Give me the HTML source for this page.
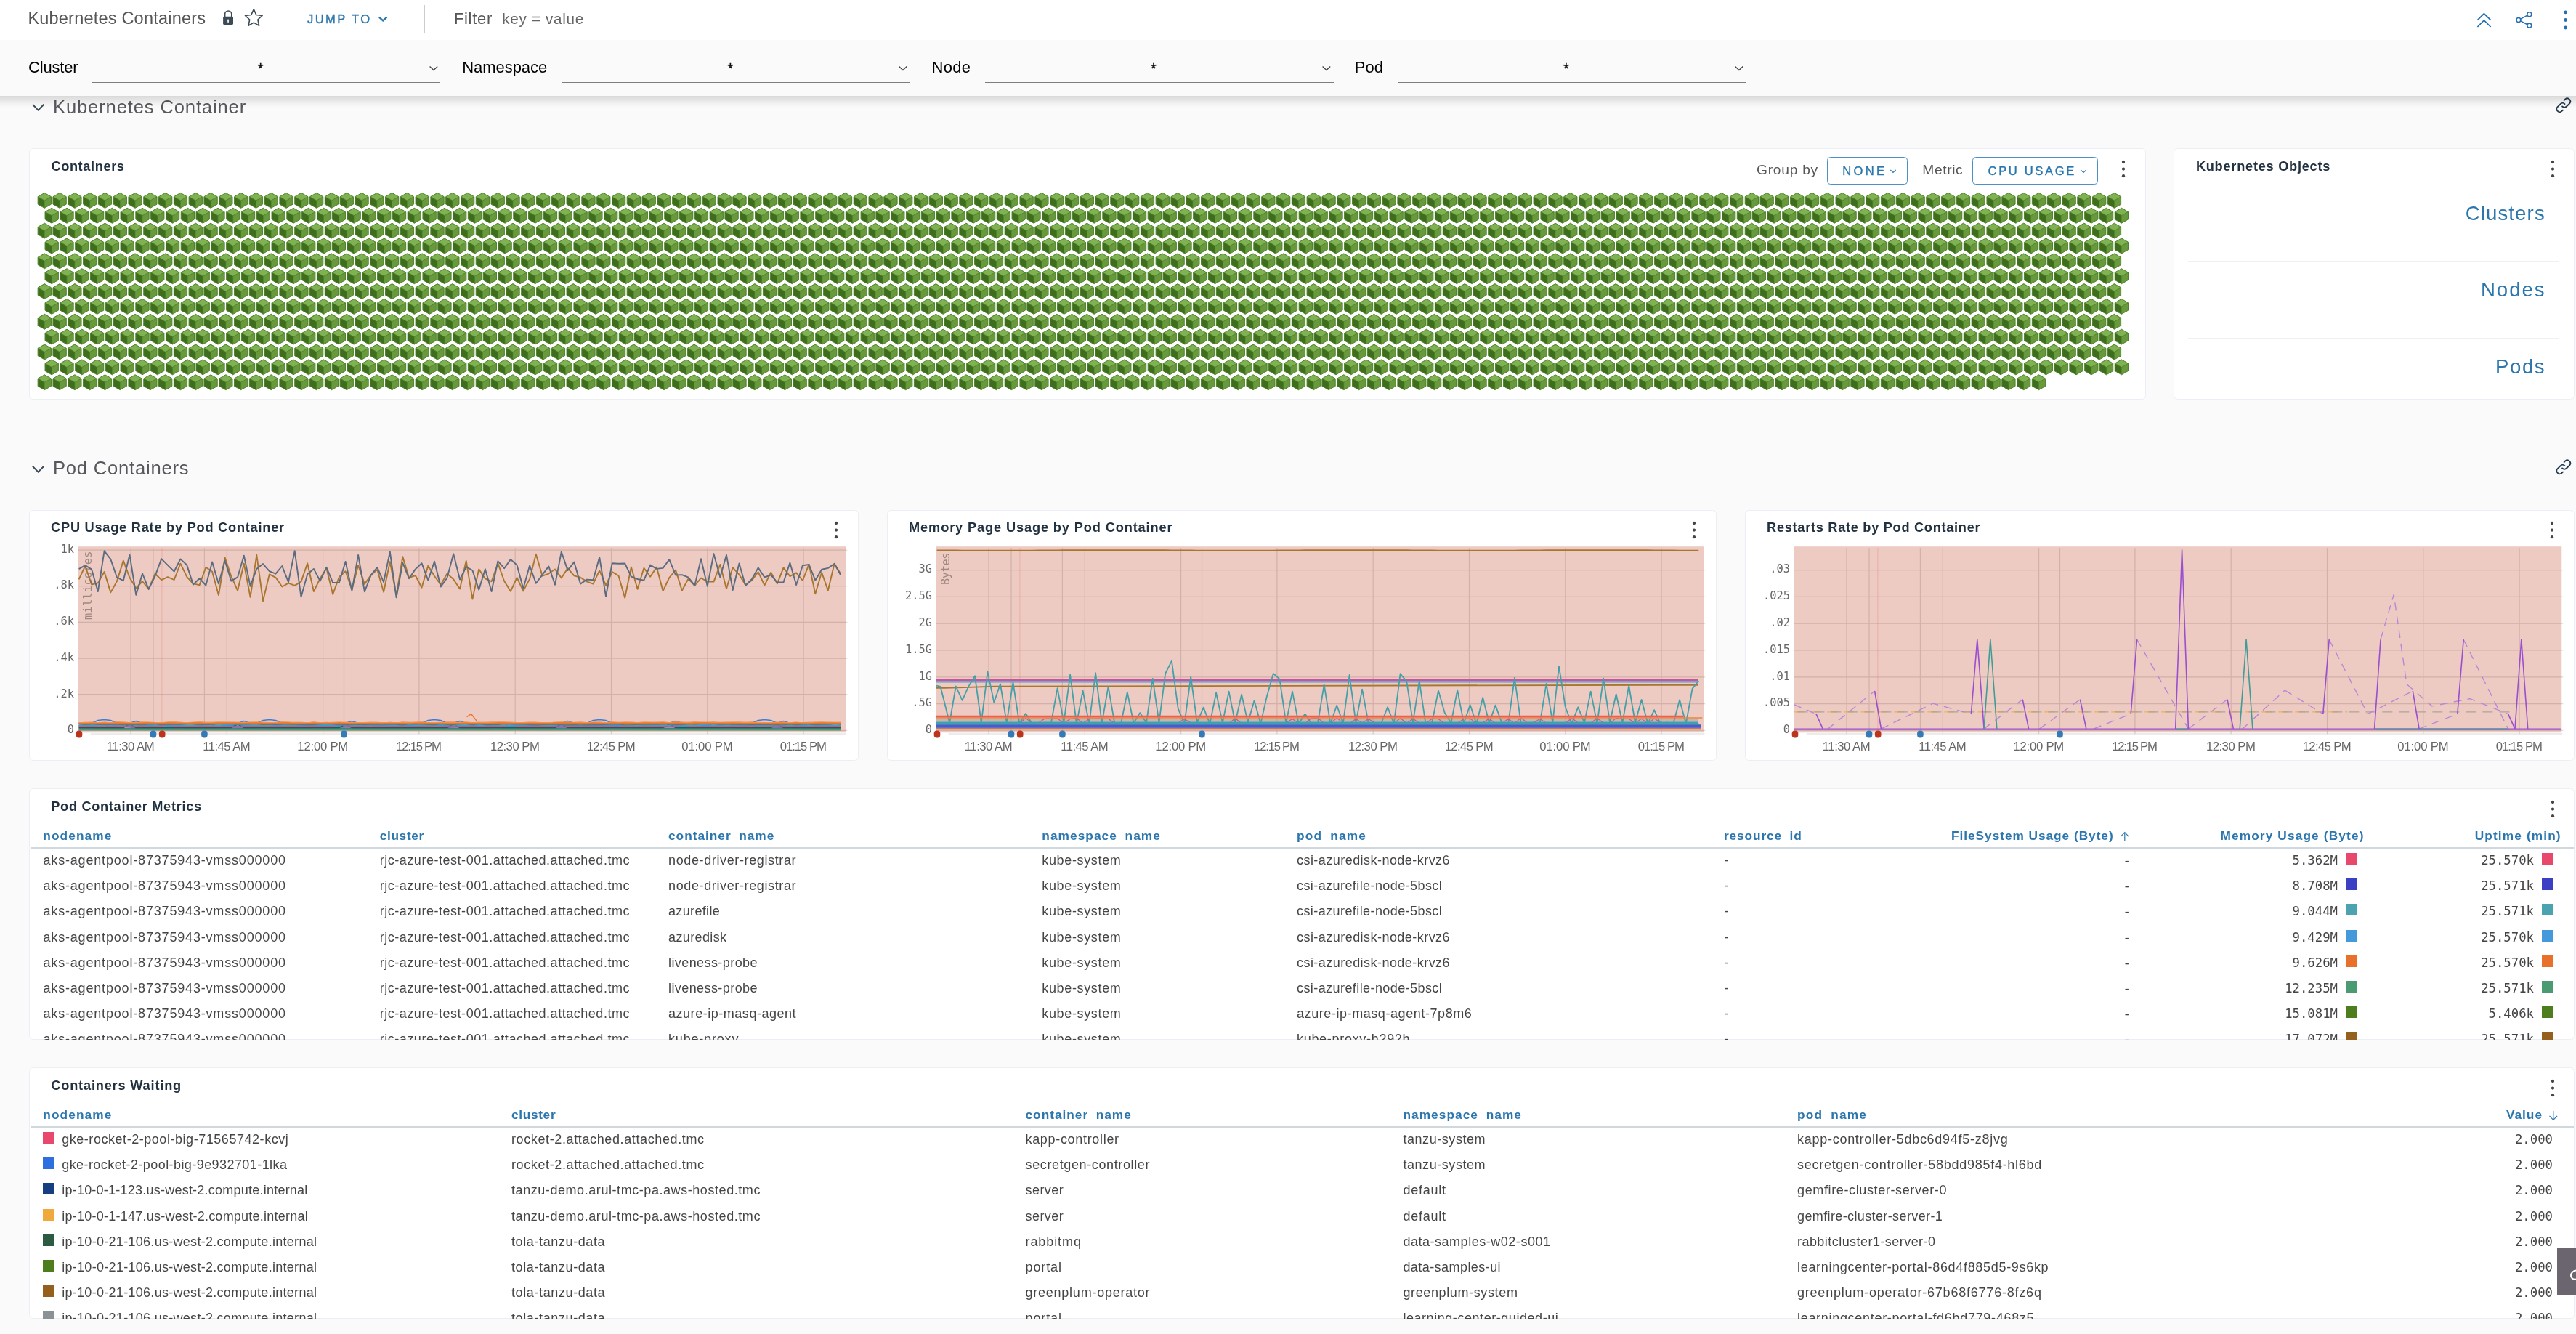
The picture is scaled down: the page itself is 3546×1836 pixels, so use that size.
<!DOCTYPE html><html lang="en"><head><meta charset="utf-8"><title>Kubernetes Containers</title><style>
*{box-sizing:border-box}
html,body{margin:0;padding:0}
h1,h2,h3{margin:0;font-weight:400}
body{width:3546px;height:1836px;overflow:hidden;background:#fafafa;font-family:"Liberation Sans",sans-serif;position:relative}
#app{position:absolute;left:0;top:0;width:3546px;height:1836px;will-change:transform;overflow:hidden}
.t{position:absolute;white-space:pre;line-height:1;display:block}
.abs{position:absolute}
.card{position:absolute;background:#fff;border:1.7px solid #ebeef4;border-radius:5.5px;overflow:hidden}
header{position:absolute;left:0;top:0;width:3546px;height:55px;background:#fff;z-index:5}
.filterbar{position:absolute;left:0;top:55px;width:3546px;height:76.6px;background:#fafafa;z-index:4}
.fshadow{position:absolute;left:0;top:131.6px;width:3546px;height:16px;background:linear-gradient(to bottom,rgba(0,0,0,.13),rgba(0,0,0,.085) 30%,rgba(0,0,0,.035) 65%,rgba(0,0,0,0));z-index:4}
.vdiv{position:absolute;width:1.4px;background:#ccc;top:7.2px;height:38.6px}
.uline{position:absolute;height:1.3px;background:#7d7d7d}
.hr{position:absolute;height:1.4px;background:#7d7680}
svg{position:absolute;overflow:visible}
.sw{position:absolute;width:16px;height:16px}
.m{-webkit-text-stroke:.35px currentColor}
</style></head><body><div id="app"><header><h1 class="t" style="left:38.40px;top:14.00px;font-size:23.5px;color:#565656;letter-spacing:0.211px;">Kubernetes Containers</h1><svg style="left:300px;top:8px" width="30" height="32" viewBox="0 0 30 32"><path d="M9.6 15 V11.6 a4.6 4.6 0 0 1 9.2 0 V15" fill="none" stroke="#3b4a55" stroke-width="1.7"/><rect x="7.1" y="14.7" width="13.9" height="11.2" rx="1.3" fill="#3b4a55"/><path d="M14.05 18.6 a1.2 1.2 0 0 1 .7 2.2 l.3 2 h-2 l.3 -2 a1.2 1.2 0 0 1 .7 -2.2z" fill="#fff"/></svg><svg style="left:330px;top:6px" width="40" height="36" viewBox="0 0 40 36"><polygon points="19.30,6.80 22.77,14.43 31.09,15.37 24.91,21.02 26.59,29.23 19.30,25.10 12.01,29.23 13.69,21.02 7.51,15.37 15.83,14.43" fill="none" stroke="#3b4a55" stroke-width="1.6" stroke-linejoin="round"/></svg><div class="vdiv" style="left:391.8px"></div><span class="t m" style="left:423.10px;top:19.00px;font-size:16.6px;color:#2a76ad;letter-spacing:2.360px;">JUMP TO</span><svg style="left:518px;top:18px" width="20" height="16" viewBox="0 0 20 16"><path d="M3.9 5.6 L9.2 10.4 L14.5 5.6" fill="none" stroke="#2a76ad" stroke-width="2.3"/></svg><div class="vdiv" style="left:583.9px"></div><span class="t" style="left:624.90px;top:15.00px;font-size:22px;color:#565656;letter-spacing:0.702px;">Filter</span><span class="t" style="left:691.30px;top:16.00px;font-size:20.6px;color:#666;letter-spacing:0.705px;">key = value</span><div class="uline" style="left:688px;top:44.8px;width:320px;background:#5e5e5e"></div><svg style="left:3400px;top:10px" width="40" height="36" viewBox="0 0 40 36"><path d="M10.4 17.6 L19.4 8.8 L28.6 17.6 M10.4 27 L19.4 18 L28.6 27" fill="none" stroke="#2470b3" stroke-width="1.7"/></svg><svg style="left:3456px;top:10px" width="40" height="36" viewBox="0 0 40 36"><g fill="none" stroke="#2470b3" stroke-width="1.6"><circle cx="10.9" cy="17.5" r="3"/><circle cx="25.8" cy="9.7" r="3"/><circle cx="25.8" cy="25.1" r="3"/><path d="M13.6 16.1 L23.1 11.1 M13.6 18.9 L23.1 23.7"/></g></svg><svg style="left:3520px;top:10px" width="24" height="36" viewBox="0 0 24 36"><g fill="#2470b3"><circle cx="11.6" cy="6.9" r="2.4"/><circle cx="11.6" cy="17.5" r="2.4"/><circle cx="11.6" cy="28" r="2.4"/></g></svg></header><div class="filterbar"><span class="t" style="left:39.00px;top:27.00px;font-size:22px;color:#000;letter-spacing:-0.198px;">Cluster</span><div class="uline" style="left:126.7px;top:57.900000000000006px;width:479.8px"></div><span class="t m" style="left:354.80px;top:29.00px;font-size:20px;color:#111;">*</span><svg style="left:588.5px;top:33px" width="16" height="12" viewBox="0 0 16 12"><path d="M2.6 3.6 L7.9 8.6 L13.2 3.6" fill="none" stroke="#444" stroke-width="1.35"/></svg><span class="t" style="left:636.30px;top:27.00px;font-size:22px;color:#000;letter-spacing:-0.061px;">Namespace</span><div class="uline" style="left:773.3px;top:57.900000000000006px;width:479.8px"></div><span class="t m" style="left:1001.40px;top:29.00px;font-size:20px;color:#111;">*</span><svg style="left:1235.1px;top:33px" width="16" height="12" viewBox="0 0 16 12"><path d="M2.6 3.6 L7.9 8.6 L13.2 3.6" fill="none" stroke="#444" stroke-width="1.35"/></svg><span class="t" style="left:1282.50px;top:27.00px;font-size:22px;color:#000;letter-spacing:0.302px;">Node</span><div class="uline" style="left:1356px;top:57.900000000000006px;width:479.8px"></div><span class="t m" style="left:1584.10px;top:29.00px;font-size:20px;color:#111;">*</span><svg style="left:1817.8px;top:33px" width="16" height="12" viewBox="0 0 16 12"><path d="M2.6 3.6 L7.9 8.6 L13.2 3.6" fill="none" stroke="#444" stroke-width="1.35"/></svg><span class="t" style="left:1864.70px;top:27.00px;font-size:22px;color:#000;letter-spacing:0.022px;">Pod</span><div class="uline" style="left:1923.9px;top:57.900000000000006px;width:479.8px"></div><span class="t m" style="left:2152.00px;top:29.00px;font-size:20px;color:#111;">*</span><svg style="left:2385.7000000000003px;top:33px" width="16" height="12" viewBox="0 0 16 12"><path d="M2.6 3.6 L7.9 8.6 L13.2 3.6" fill="none" stroke="#444" stroke-width="1.35"/></svg></div><div class="fshadow"></div><svg style="left:42px;top:139.2px" width="22" height="18" viewBox="0 0 22 18"><path d="M2.9 4.8 L10.6 12.6 L18.3 4.8" fill="none" stroke="#3b4a55" stroke-width="2"/></svg><h2 class="t" style="left:73.00px;top:135.00px;font-size:25.6px;color:#5a565e;letter-spacing:0.853px;">Kubernetes Container</h2><div class="hr" style="left:359px;top:147.5px;width:3147px"></div><svg style="left:3516.6px;top:133.39999999999998px" width="23.6" height="23.6" viewBox="0 0 22 22"><path d="M9.4 12.6 a3.9 3.9 0 0 0 5.5 0 l3.9 -3.9 a3.9 3.9 0 0 0 -5.5 -5.5 l-1.5 1.5 M12.6 9.4 a3.9 3.9 0 0 0 -5.5 0 l-3.9 3.9 a3.9 3.9 0 0 0 5.5 5.5 l1.5 -1.5" fill="none" stroke="#21384f" stroke-width="1.7" stroke-linecap="round"/></svg><svg style="left:42px;top:636.6px" width="22" height="18" viewBox="0 0 22 18"><path d="M2.9 4.8 L10.6 12.6 L18.3 4.8" fill="none" stroke="#3b4a55" stroke-width="2"/></svg><h2 class="t" style="left:73.00px;top:632.00px;font-size:25.6px;color:#5a565e;letter-spacing:0.775px;">Pod Containers</h2><div class="hr" style="left:279.5px;top:644.9px;width:3226.5px"></div><svg style="left:3516.6px;top:630.8000000000001px" width="23.6" height="23.6" viewBox="0 0 22 22"><path d="M9.4 12.6 a3.9 3.9 0 0 0 5.5 0 l3.9 -3.9 a3.9 3.9 0 0 0 -5.5 -5.5 l-1.5 1.5 M12.6 9.4 a3.9 3.9 0 0 0 -5.5 0 l-3.9 3.9 a3.9 3.9 0 0 0 5.5 5.5 l1.5 -1.5" fill="none" stroke="#21384f" stroke-width="1.7" stroke-linecap="round"/></svg><section class="card" style="left:40.4px;top:204.0px;width:2913.2px;height:345.79999999999995px"></section><h3 class="t" style="left:70.40px;top:220.00px;font-size:18.2px;color:#22313f;font-weight:700;letter-spacing:0.622px;">Containers</h3><span class="t" style="left:2418.00px;top:224.00px;font-size:19.2px;color:#565656;letter-spacing:0.752px;">Group by</span><div class="abs" style="left:2515.2px;top:216.3px;width:110.8px;height:37.4px;border:1.4px solid #4f8fc4;border-radius:4.5px"></div><span class="t m" style="left:2536.30px;top:228.00px;font-size:16.6px;color:#2a76ad;letter-spacing:3.249px;">NONE</span><svg style="left:2600px;top:230px" width="12" height="10" viewBox="0 0 12 10"><path d="M2.2 3.9 L6 7.5 L9.8 3.9" fill="none" stroke="#2a76ad" stroke-width="1.2"/></svg><span class="t" style="left:2646.30px;top:224.00px;font-size:19.2px;color:#565656;letter-spacing:0.633px;">Metric</span><div class="abs" style="left:2715.2px;top:216.3px;width:173.3px;height:37.4px;border:1.4px solid #4f8fc4;border-radius:4.5px"></div><span class="t m" style="left:2736.50px;top:228.00px;font-size:16.6px;color:#2a76ad;letter-spacing:2.644px;">CPU USAGE</span><svg style="left:2862px;top:230px" width="12" height="10" viewBox="0 0 12 10"><path d="M2.2 3.9 L6 7.5 L9.8 3.9" fill="none" stroke="#2a76ad" stroke-width="1.2"/></svg><svg style="left:2918.3px;top:217.9px" width="10" height="29.2" viewBox="0 0 10 29.2"><g fill="#444"><circle cx="5" cy="5" r="2.15"/><circle cx="5" cy="14.6" r="2.15"/><circle cx="5" cy="24.2" r="2.15"/></g></svg><svg style="left:0;top:0" width="3546" height="600" viewBox="0 0 3546 600"><defs><g id="h"><polygon points="0,-10.45 9.15,-5.22 9.15,5.22 0,10.45 -9.15,5.22 -9.15,-5.22" fill="#4f8429" stroke="#4f8429" stroke-width="1.0" stroke-linejoin="round"/><polygon points="0,-10.45 9.15,-5.22 0,0 -9.15,-5.22" fill="#80b254" transform="scale(.9) translate(0,-.5)"/><polygon points="-9.15,-5.22 0,0 0,10.45 -9.15,5.22" fill="#3f6d1e" transform="scale(.9) translate(-.4,.3)"/><polygon points="0,0 9.15,-5.22 9.15,5.22 0,10.45" fill="#68993c" transform="scale(.9) translate(.4,.3)"/></g><g id="r"><use href="#h" x="0.00"/><use href="#h" x="20.80"/><use href="#h" x="41.59"/><use href="#h" x="62.39"/><use href="#h" x="83.19"/><use href="#h" x="103.98"/><use href="#h" x="124.78"/><use href="#h" x="145.58"/><use href="#h" x="166.38"/><use href="#h" x="187.17"/><use href="#h" x="207.97"/><use href="#h" x="228.77"/><use href="#h" x="249.56"/><use href="#h" x="270.36"/><use href="#h" x="291.16"/><use href="#h" x="311.95"/><use href="#h" x="332.75"/><use href="#h" x="353.55"/><use href="#h" x="374.35"/><use href="#h" x="395.14"/><use href="#h" x="415.94"/><use href="#h" x="436.74"/><use href="#h" x="457.53"/><use href="#h" x="478.33"/><use href="#h" x="499.13"/><use href="#h" x="519.93"/><use href="#h" x="540.72"/><use href="#h" x="561.52"/><use href="#h" x="582.32"/><use href="#h" x="603.11"/><use href="#h" x="623.91"/><use href="#h" x="644.71"/><use href="#h" x="665.50"/><use href="#h" x="686.30"/><use href="#h" x="707.10"/><use href="#h" x="727.89"/><use href="#h" x="748.69"/><use href="#h" x="769.49"/><use href="#h" x="790.29"/><use href="#h" x="811.08"/><use href="#h" x="831.88"/><use href="#h" x="852.68"/><use href="#h" x="873.47"/><use href="#h" x="894.27"/><use href="#h" x="915.07"/><use href="#h" x="935.87"/><use href="#h" x="956.66"/><use href="#h" x="977.46"/><use href="#h" x="998.26"/><use href="#h" x="1019.05"/><use href="#h" x="1039.85"/><use href="#h" x="1060.65"/><use href="#h" x="1081.44"/><use href="#h" x="1102.24"/><use href="#h" x="1123.04"/><use href="#h" x="1143.84"/><use href="#h" x="1164.63"/><use href="#h" x="1185.43"/><use href="#h" x="1206.23"/><use href="#h" x="1227.02"/><use href="#h" x="1247.82"/><use href="#h" x="1268.62"/><use href="#h" x="1289.41"/><use href="#h" x="1310.21"/><use href="#h" x="1331.01"/><use href="#h" x="1351.81"/><use href="#h" x="1372.60"/><use href="#h" x="1393.40"/><use href="#h" x="1414.20"/><use href="#h" x="1434.99"/><use href="#h" x="1455.79"/><use href="#h" x="1476.59"/><use href="#h" x="1497.38"/><use href="#h" x="1518.18"/><use href="#h" x="1538.98"/><use href="#h" x="1559.78"/><use href="#h" x="1580.57"/><use href="#h" x="1601.37"/><use href="#h" x="1622.17"/><use href="#h" x="1642.96"/><use href="#h" x="1663.76"/><use href="#h" x="1684.56"/><use href="#h" x="1705.35"/><use href="#h" x="1726.15"/><use href="#h" x="1746.95"/><use href="#h" x="1767.75"/><use href="#h" x="1788.54"/><use href="#h" x="1809.34"/><use href="#h" x="1830.14"/><use href="#h" x="1850.93"/><use href="#h" x="1871.73"/><use href="#h" x="1892.53"/><use href="#h" x="1913.32"/><use href="#h" x="1934.12"/><use href="#h" x="1954.92"/><use href="#h" x="1975.72"/><use href="#h" x="1996.51"/><use href="#h" x="2017.31"/><use href="#h" x="2038.11"/><use href="#h" x="2058.90"/><use href="#h" x="2079.70"/><use href="#h" x="2100.50"/><use href="#h" x="2121.29"/><use href="#h" x="2142.09"/><use href="#h" x="2162.89"/><use href="#h" x="2183.68"/><use href="#h" x="2204.48"/><use href="#h" x="2225.28"/><use href="#h" x="2246.08"/><use href="#h" x="2266.87"/><use href="#h" x="2287.67"/><use href="#h" x="2308.47"/><use href="#h" x="2329.26"/><use href="#h" x="2350.06"/><use href="#h" x="2370.86"/><use href="#h" x="2391.66"/><use href="#h" x="2412.45"/><use href="#h" x="2433.25"/><use href="#h" x="2454.05"/><use href="#h" x="2474.84"/><use href="#h" x="2495.64"/><use href="#h" x="2516.44"/><use href="#h" x="2537.23"/><use href="#h" x="2558.03"/><use href="#h" x="2578.83"/><use href="#h" x="2599.62"/><use href="#h" x="2620.42"/><use href="#h" x="2641.22"/><use href="#h" x="2662.02"/><use href="#h" x="2682.81"/><use href="#h" x="2703.61"/><use href="#h" x="2724.41"/><use href="#h" x="2745.20"/></g><g id="rt"><use href="#h" x="2766.00"/><use href="#h" x="2786.80"/><use href="#h" x="2807.60"/><use href="#h" x="2828.39"/><use href="#h" x="2849.19"/></g></defs><use href="#r" x="61.30" y="275.90"/><use href="#rt" x="61.30" y="275.90"/><use href="#r" x="71.20" y="296.76"/><use href="#rt" x="71.20" y="296.76"/><use href="#r" x="61.30" y="317.62"/><use href="#rt" x="61.30" y="317.62"/><use href="#r" x="71.20" y="338.48"/><use href="#rt" x="71.20" y="338.48"/><use href="#r" x="61.30" y="359.34"/><use href="#rt" x="61.30" y="359.34"/><use href="#r" x="71.20" y="380.20"/><use href="#rt" x="71.20" y="380.20"/><use href="#r" x="61.30" y="401.06"/><use href="#rt" x="61.30" y="401.06"/><use href="#r" x="71.20" y="421.92"/><use href="#rt" x="71.20" y="421.92"/><use href="#r" x="61.30" y="442.78"/><use href="#rt" x="61.30" y="442.78"/><use href="#r" x="71.20" y="463.64"/><use href="#rt" x="71.20" y="463.64"/><use href="#r" x="61.30" y="484.50"/><use href="#rt" x="61.30" y="484.50"/><use href="#r" x="71.20" y="505.36"/><use href="#rt" x="71.20" y="505.36"/><use href="#r" x="61.30" y="526.22"/></svg><section class="card" style="left:2992px;top:204px;width:552.2px;height:345.8px"><div class="abs" style="left:19.2px;top:153.6px;width:511px;height:1.4px;background:#eef0f4"></div><div class="abs" style="left:19.2px;top:259.7px;width:511px;height:1.4px;background:#eef0f4"></div></section><h3 class="t" style="left:3022.90px;top:220.00px;font-size:18.2px;color:#22313f;font-weight:700;letter-spacing:0.745px;">Kubernetes Objects</h3><svg style="left:3508.7px;top:218px" width="10" height="29.2" viewBox="0 0 10 29.2"><g fill="#444"><circle cx="5" cy="5" r="2.15"/><circle cx="5" cy="14.6" r="2.15"/><circle cx="5" cy="24.2" r="2.15"/></g></svg><span class="t" style="left:3393.70px;top:280.00px;font-size:27.6px;color:#2a76ad;letter-spacing:1.114px;">Clusters</span><span class="t" style="left:3414.90px;top:385.00px;font-size:27.6px;color:#2a76ad;letter-spacing:1.984px;">Nodes</span><span class="t" style="left:3435.10px;top:491.00px;font-size:27.6px;color:#2a76ad;letter-spacing:1.531px;">Pods</span><section class="card" style="left:40.4px;top:701.8px;width:1142px;height:345.6px"></section><h3 class="t" style="left:70.10px;top:717.00px;font-size:18.2px;color:#22313f;font-weight:700;letter-spacing:0.762px;">CPU Usage Rate by Pod Container</h3><svg style="left:1146.2px;top:715.2px" width="10" height="29.2" viewBox="0 0 10 29.2"><g fill="#444"><circle cx="5" cy="5" r="2.15"/><circle cx="5" cy="14.6" r="2.15"/><circle cx="5" cy="24.2" r="2.15"/></g></svg><svg style="left:40.7px;top:701.9px" width="1140.5" height="344.8" viewBox="0 0 1140.5 344.8"><rect x="66.6" y="50.2" width="1056.7" height="256.1" fill="#eecbc2"/><path d="M83.6 308.1 H1124.3" stroke="#e6e6e6" stroke-width="1.5"/><path d="M66.6 55.1 H1125.3 M66.6 104.7 H1125.3 M66.6 154.4 H1125.3 M66.6 204.1 H1125.3 M66.6 253.7 H1125.3 M66.6 303.3 H1125.3 M139.0 52.2 V308.3 M271.3 52.2 V308.3 M403.6 52.2 V308.3 M535.9 52.2 V308.3 M668.2 52.2 V308.3 M800.5 52.2 V308.3 M932.8 52.2 V308.3 M1065.1 52.2 V308.3 M170.0 52.2 V306.3 M240.4 52.2 V306.3 M432.5 52.2 V306.3 " stroke="rgba(110,80,80,.21)" stroke-width="1.2" fill="none"/><path d="M181.9 52.2 V306.3" stroke="rgba(225,120,110,.30)" stroke-width="1.2"/><polyline points="67.6,95.3 76.3,76.8 85.1,102.5 93.8,100.4 102.6,85.0 111.3,113.4 120.0,97.9 128.8,69.6 137.5,93.1 146.3,107.5 155.0,98.0 163.7,108.7 172.5,87.5 181.2,96.2 189.9,92.1 198.7,96.0 207.4,73.7 216.2,91.8 224.9,101.4 233.6,103.1 242.4,78.7 251.1,84.7 259.9,117.1 268.6,65.4 277.3,91.2 286.1,110.8 294.8,73.7 303.6,119.8 312.3,61.8 321.0,125.2 329.8,88.4 338.5,92.8 347.3,105.5 356.0,100.7 364.7,103.9 373.5,98.6 382.2,73.3 390.9,112.0 399.7,94.2 408.4,80.0 417.2,115.9 425.9,92.0 434.6,84.3 443.4,109.4 452.1,76.0 460.9,101.9 469.6,89.6 478.3,82.1 487.1,112.7 495.8,71.2 504.6,117.4 513.3,64.1 522.0,93.0 530.8,90.0 539.5,106.7 548.3,76.8 557.0,90.8 565.7,102.8 574.5,87.4 583.2,95.2 592.0,108.6 600.7,69.9 609.4,122.6 618.2,81.4 626.9,94.5 635.6,98.2 644.4,73.2 653.1,97.7 661.9,111.8 670.6,92.8 679.3,111.4 688.1,94.9 696.8,60.7 705.6,90.7 714.3,87.6 723.0,81.4 731.8,93.4 740.5,79.9 749.3,90.3 758.0,92.7 766.7,98.4 775.5,101.6 784.2,83.1 793.0,103.5 801.7,85.1 810.4,90.2 819.2,120.7 827.9,78.5 836.6,108.8 845.4,79.8 854.1,91.7 862.9,78.6 871.6,111.4 880.3,93.0 889.1,82.6 897.8,110.8 906.6,94.5 915.3,103.8 924.0,93.5 932.8,98.5 941.5,98.6 950.3,75.0 959.0,108.2 967.7,79.1 976.5,88.8 985.2,102.9 994.0,96.7 1002.7,85.2 1011.4,103.6 1020.2,85.7 1028.9,101.4 1037.6,79.2 1046.4,91.1 1055.1,86.3 1063.9,97.0 1072.6,74.6 1081.3,115.2 1090.1,85.7 1098.8,110.8 1107.6,73.7 1116.3,87.9" fill="none" stroke="#a8762f" stroke-width="1.9" stroke-linejoin="round"/><polyline points="67.6,81.1 76.3,76.1 85.1,81.5 93.8,112.1 102.6,56.3 111.3,67.7 120.0,92.7 128.8,97.2 137.5,61.6 146.3,116.8 155.0,87.4 163.7,108.9 172.5,90.8 181.2,67.2 189.9,75.9 198.7,84.5 207.4,67.4 216.2,75.6 224.9,102.6 233.6,94.0 242.4,103.5 251.1,71.4 259.9,101.4 268.6,69.6 277.3,97.6 286.1,92.4 294.8,62.6 303.6,104.7 312.3,80.9 321.0,74.1 329.8,84.1 338.5,87.7 347.3,77.0 356.0,99.2 364.7,56.3 373.5,119.6 382.2,88.2 390.9,80.9 399.7,97.7 408.4,78.8 417.2,99.9 425.9,99.6 434.6,71.0 443.4,110.9 452.1,61.9 460.9,112.4 469.6,89.6 478.3,78.9 487.1,99.1 495.8,57.5 504.6,120.4 513.3,72.5 522.0,94.2 530.8,81.4 539.5,73.2 548.3,96.6 557.0,70.7 565.7,105.6 574.5,93.2 583.2,60.3 592.0,95.5 600.7,78.2 609.4,83.0 618.2,109.6 626.9,81.2 635.6,112.0 644.4,70.3 653.1,80.2 661.9,67.9 670.6,75.8 679.3,108.1 688.1,76.4 696.8,100.8 705.6,89.1 714.3,77.4 723.0,102.7 731.8,57.5 740.5,83.1 749.3,71.6 758.0,101.6 766.7,95.6 775.5,96.3 784.2,65.0 793.0,118.7 801.7,73.3 810.4,73.8 819.2,73.5 827.9,91.7 836.6,95.0 845.4,96.7 854.1,75.6 862.9,80.9 871.6,79.9 880.3,68.1 889.1,89.5 897.8,89.1 906.6,92.7 915.3,103.9 924.0,67.2 932.8,104.7 941.5,60.3 950.3,92.6 959.0,61.8 967.7,110.0 976.5,73.5 985.2,104.0 994.0,95.0 1002.7,79.4 1011.4,92.5 1020.2,89.3 1028.9,99.7 1037.6,99.1 1046.4,72.5 1055.1,103.0 1063.9,76.2 1072.6,75.0 1081.3,96.7 1090.1,81.8 1098.8,79.9 1107.6,74.0 1116.3,89.5" fill="none" stroke="#5b6b80" stroke-width="1.9" stroke-linejoin="round"/><polyline points="67.6,302.2 76.3,302.2 85.1,302.2 93.8,302.2 102.6,302.2 111.3,302.2 120.0,302.2 128.8,302.2 137.5,302.2 146.3,302.2 155.0,302.2 163.7,302.2 172.5,302.2 181.2,302.2 189.9,302.2 198.7,302.2 207.4,302.2 216.2,302.2 224.9,302.2 233.6,302.2 242.4,302.2 251.1,302.2 259.9,302.2 268.6,302.2 277.3,302.2 286.1,302.2 294.8,302.2 303.6,302.2 312.3,302.2 321.0,302.2 329.8,302.2 338.5,302.2 347.3,302.2 356.0,302.2 364.7,302.2 373.5,302.2 382.2,302.2 390.9,302.2 399.7,302.2 408.4,302.2 417.2,302.2 425.9,302.2 434.6,302.2 443.4,302.2 452.1,302.2 460.9,302.2 469.6,302.2 478.3,302.2 487.1,302.2 495.8,302.2 504.6,302.2 513.3,302.2 522.0,302.2 530.8,302.2 539.5,302.2 548.3,302.2 557.0,302.2 565.7,302.2 574.5,302.2 583.2,302.2 592.0,302.2 600.7,302.2 609.4,302.2 618.2,302.2 626.9,302.2 635.6,302.2 644.4,302.2 653.1,302.2 661.9,302.2 670.6,302.2 679.3,302.2 688.1,302.2 696.8,302.2 705.6,302.2 714.3,302.2 723.0,302.2 731.8,302.2 740.5,302.2 749.3,302.2 758.0,302.2 766.7,302.2 775.5,302.2 784.2,302.2 793.0,302.2 801.7,302.2 810.4,302.2 819.2,302.2 827.9,302.2 836.6,302.2 845.4,302.2 854.1,302.2 862.9,302.2 871.6,302.2 880.3,302.2 889.1,302.2 897.8,302.2 906.6,302.2 915.3,302.2 924.0,302.2 932.8,302.2 941.5,302.2 950.3,302.2 959.0,302.2 967.7,302.2 976.5,302.2 985.2,302.2 994.0,302.2 1002.7,302.2 1011.4,302.2 1020.2,302.2 1028.9,302.2 1037.6,302.2 1046.4,302.2 1055.1,302.2 1063.9,302.2 1072.6,302.2 1081.3,302.2 1090.1,302.2 1098.8,302.2 1107.6,302.2 1116.3,302.2" fill="none" stroke="#4a9b6e" stroke-width="2.4" stroke-linejoin="round"/><polyline points="67.6,300.4 76.3,300.6 85.1,300.2 93.8,300.2 102.6,300.5 111.3,300.4 120.0,300.6 128.8,300.6 137.5,300.6 146.3,300.4 155.0,300.6 163.7,300.2 172.5,300.7 181.2,300.6 189.9,300.6 198.7,300.3 207.4,300.5 216.2,300.5 224.9,300.5 233.6,300.4 242.4,300.5 251.1,300.6 259.9,300.5 268.6,300.5 277.3,300.6 286.1,300.3 294.8,300.4 303.6,300.4 312.3,300.3 321.0,300.5 329.8,300.5 338.5,300.5 347.3,300.5 356.0,300.4 364.7,300.7 373.5,300.5 382.2,300.4 390.9,300.5 399.7,300.7 408.4,300.3 417.2,300.7 425.9,300.4 434.6,300.6 443.4,300.7 452.1,300.6 460.9,300.7 469.6,300.6 478.3,300.4 487.1,300.3 495.8,300.5 504.6,300.4 513.3,300.5 522.0,300.4 530.8,300.3 539.5,300.5 548.3,300.3 557.0,300.4 565.7,300.4 574.5,300.7 583.2,300.7 592.0,300.7 600.7,300.5 609.4,300.2 618.2,300.3 626.9,300.3 635.6,300.6 644.4,300.3 653.1,300.3 661.9,300.3 670.6,300.3 679.3,300.6 688.1,300.6 696.8,300.3 705.6,300.3 714.3,300.3 723.0,300.5 731.8,300.3 740.5,300.6 749.3,300.2 758.0,300.3 766.7,300.5 775.5,300.7 784.2,300.4 793.0,300.4 801.7,300.5 810.4,300.7 819.2,300.6 827.9,300.3 836.6,300.6 845.4,300.2 854.1,300.6 862.9,300.6 871.6,300.6 880.3,300.2 889.1,300.2 897.8,300.5 906.6,300.6 915.3,300.4 924.0,300.3 932.8,300.7 941.5,300.4 950.3,300.3 959.0,300.5 967.7,300.4 976.5,300.3 985.2,300.6 994.0,300.6 1002.7,300.4 1011.4,300.4 1020.2,300.4 1028.9,300.5 1037.6,300.2 1046.4,300.6 1055.1,300.4 1063.9,300.3 1072.6,300.5 1081.3,300.7 1090.1,300.6 1098.8,300.7 1107.6,300.6 1116.3,300.6" fill="none" stroke="#3f8088" stroke-width="1.8" stroke-linejoin="round"/><polyline points="67.6,299.7 76.3,299.2 85.1,299.7 93.8,299.1 102.6,299.2 111.3,299.4 120.0,299.2 128.8,299.3 137.5,299.8 146.3,299.3 155.0,299.2 163.7,299.3 172.5,299.0 181.2,299.1 189.9,299.5 198.7,299.6 207.4,299.7 216.2,299.0 224.9,299.1 233.6,299.2 242.4,299.4 251.1,299.3 259.9,299.6 268.6,299.3 277.3,299.7 286.1,299.2 294.8,299.2 303.6,299.2 312.3,299.6 321.0,299.7 329.8,299.5 338.5,299.1 347.3,299.3 356.0,299.1 364.7,299.4 373.5,299.4 382.2,298.9 390.9,299.7 399.7,299.6 408.4,299.2 417.2,299.2 425.9,299.4 434.6,299.3 443.4,299.4 452.1,299.2 460.9,298.9 469.6,299.0 478.3,299.2 487.1,299.4 495.8,298.9 504.6,299.4 513.3,299.2 522.0,299.0 530.8,299.1 539.5,299.4 548.3,299.1 557.0,299.2 565.7,298.9 574.5,299.2 583.2,299.3 592.0,298.9 600.7,299.3 609.4,299.4 618.2,298.9 626.9,298.9 635.6,299.7 644.4,299.8 653.1,299.0 661.9,298.9 670.6,299.4 679.3,299.6 688.1,299.1 696.8,298.9 705.6,299.6 714.3,299.4 723.0,299.2 731.8,299.6 740.5,299.4 749.3,299.7 758.0,299.3 766.7,299.6 775.5,299.7 784.2,299.4 793.0,299.7 801.7,299.7 810.4,299.7 819.2,299.4 827.9,299.5 836.6,299.1 845.4,299.4 854.1,299.6 862.9,299.6 871.6,299.5 880.3,299.1 889.1,299.6 897.8,299.4 906.6,299.0 915.3,299.0 924.0,299.4 932.8,299.0 941.5,299.2 950.3,299.6 959.0,299.7 967.7,299.7 976.5,299.0 985.2,299.4 994.0,299.0 1002.7,298.9 1011.4,298.9 1020.2,299.4 1028.9,299.8 1037.6,299.6 1046.4,299.6 1055.1,299.2 1063.9,299.1 1072.6,298.9 1081.3,299.1 1090.1,298.9 1098.8,299.2 1107.6,299.4 1116.3,299.0" fill="none" stroke="#5b7fa8" stroke-width="1.4" stroke-linejoin="round"/><polyline points="67.6,298.1 76.3,298.6 85.1,298.4 93.8,298.4 102.6,298.9 111.3,299.0 120.0,298.5 128.8,299.0 137.5,298.7 146.3,298.2 155.0,298.2 163.7,299.0 172.5,299.0 181.2,298.9 189.9,298.3 198.7,299.1 207.4,298.9 216.2,299.0 224.9,299.0 233.6,298.6 242.4,298.9 251.1,298.7 259.9,298.4 268.6,298.4 277.3,298.7 286.1,298.3 294.8,298.5 303.6,298.3 312.3,298.8 321.0,298.7 329.8,298.5 338.5,298.1 347.3,298.5 356.0,298.6 364.7,298.8 373.5,298.8 382.2,298.9 390.9,298.1 399.7,298.2 408.4,298.2 417.2,298.6 425.9,298.4 434.6,298.8 443.4,298.6 452.1,298.9 460.9,298.7 469.6,298.8 478.3,299.0 487.1,298.2 495.8,299.0 504.6,298.3 513.3,298.4 522.0,299.0 530.8,298.6 539.5,298.1 548.3,298.1 557.0,298.5 565.7,298.3 574.5,298.4 583.2,298.8 592.0,298.5 600.7,298.5 609.4,298.7 618.2,298.3 626.9,298.6 635.6,298.3 644.4,299.0 653.1,298.6 661.9,299.0 670.6,298.4 679.3,298.2 688.1,298.5 696.8,298.5 705.6,298.5 714.3,298.9 723.0,298.7 731.8,298.5 740.5,298.4 749.3,298.7 758.0,298.6 766.7,298.8 775.5,298.5 784.2,298.4 793.0,298.8 801.7,298.4 810.4,298.2 819.2,298.5 827.9,298.1 836.6,298.8 845.4,298.2 854.1,298.9 862.9,298.7 871.6,298.3 880.3,299.0 889.1,298.5 897.8,298.2 906.6,298.1 915.3,298.4 924.0,298.7 932.8,298.8 941.5,298.5 950.3,299.0 959.0,299.1 967.7,298.2 976.5,298.5 985.2,298.9 994.0,298.7 1002.7,298.8 1011.4,298.2 1020.2,298.8 1028.9,298.4 1037.6,298.3 1046.4,298.8 1055.1,298.8 1063.9,298.6 1072.6,298.7 1081.3,298.5 1090.1,298.8 1098.8,298.3 1107.6,298.7 1116.3,298.9" fill="none" stroke="#8a8fb0" stroke-width="1.3" stroke-linejoin="round"/><polyline points="67.6,297.4 76.3,297.5 85.1,297.7 93.8,298.5 102.6,298.3 111.3,297.8 120.0,297.6 128.8,298.8 137.5,298.6 146.3,297.5 155.0,298.7 163.7,297.9 172.5,298.3 181.2,297.9 189.9,297.5 198.7,298.0 207.4,298.2 216.2,298.4 224.9,297.9 233.6,297.9 242.4,298.2 251.1,298.1 259.9,298.0 268.6,298.4 277.3,298.6 286.1,298.0 294.8,298.7 303.6,297.9 312.3,297.6 321.0,297.6 329.8,298.5 338.5,298.2 347.3,297.5 356.0,298.3 364.7,297.4 373.5,298.5 382.2,297.6 390.9,298.8 399.7,297.8 408.4,297.6 417.2,298.0 425.9,297.9 434.6,297.5 443.4,297.3 452.1,298.6 460.9,298.1 469.6,298.8 478.3,298.3 487.1,298.6 495.8,298.6 504.6,297.9 513.3,298.7 522.0,298.6 530.8,298.8 539.5,297.6 548.3,298.5 557.0,298.7 565.7,297.9 574.5,297.8 583.2,297.9 592.0,298.0 600.7,298.0 609.4,297.8 618.2,298.4 626.9,297.6 635.6,297.8 644.4,297.6 653.1,297.5 661.9,297.6 670.6,298.1 679.3,298.1 688.1,297.7 696.8,298.0 705.6,298.8 714.3,297.5 723.0,298.5 731.8,298.1 740.5,298.2 749.3,298.7 758.0,298.0 766.7,298.0 775.5,297.6 784.2,297.9 793.0,298.4 801.7,298.0 810.4,297.4 819.2,297.9 827.9,297.6 836.6,298.8 845.4,297.8 854.1,298.5 862.9,298.6 871.6,298.3 880.3,298.6 889.1,298.7 897.8,298.5 906.6,298.5 915.3,298.5 924.0,297.6 932.8,298.7 941.5,298.5 950.3,298.8 959.0,298.1 967.7,298.5 976.5,298.0 985.2,298.5 994.0,298.5 1002.7,298.1 1011.4,298.7 1020.2,297.5 1028.9,298.0 1037.6,298.2 1046.4,298.0 1055.1,297.4 1063.9,298.1 1072.6,298.2 1081.3,298.5 1090.1,298.3 1098.8,297.7 1107.6,297.9 1116.3,298.4" fill="none" stroke="#c0c8d0" stroke-width="1.2" stroke-linejoin="round"/><polyline points="67.6,297.0 76.3,297.8 85.1,297.2 93.8,296.9 102.6,297.9 111.3,297.2 120.0,297.8 128.8,298.1 137.5,297.8 146.3,297.2 155.0,298.1 163.7,297.4 172.5,297.8 181.2,298.1 189.9,297.7 198.7,297.8 207.4,297.7 216.2,297.0 224.9,297.0 233.6,298.0 242.4,296.9 251.1,297.4 259.9,296.9 268.6,297.1 277.3,297.6 286.1,298.0 294.8,297.0 303.6,296.8 312.3,297.4 321.0,298.2 329.8,297.1 338.5,297.2 347.3,297.0 356.0,296.9 364.7,296.9 373.5,297.2 382.2,297.8 390.9,297.5 399.7,297.6 408.4,297.2 417.2,297.4 425.9,297.1 434.6,297.6 443.4,297.5 452.1,296.9 460.9,297.2 469.6,296.9 478.3,297.3 487.1,298.2 495.8,297.7 504.6,297.9 513.3,297.9 522.0,298.1 530.8,298.2 539.5,297.6 548.3,297.2 557.0,297.0 565.7,296.9 574.5,297.5 583.2,298.3 592.0,298.1 600.7,298.3 609.4,297.0 618.2,297.9 626.9,297.3 635.6,297.7 644.4,297.5 653.1,297.1 661.9,297.4 670.6,298.2 679.3,297.4 688.1,297.8 696.8,296.9 705.6,297.9 714.3,298.0 723.0,297.0 731.8,297.7 740.5,298.2 749.3,297.2 758.0,297.0 766.7,297.6 775.5,298.1 784.2,297.0 793.0,297.8 801.7,298.0 810.4,298.3 819.2,297.0 827.9,298.0 836.6,298.2 845.4,297.8 854.1,297.3 862.9,296.9 871.6,298.0 880.3,297.4 889.1,297.9 897.8,297.1 906.6,297.6 915.3,297.3 924.0,297.1 932.8,297.5 941.5,297.6 950.3,298.3 959.0,298.1 967.7,297.3 976.5,297.2 985.2,297.5 994.0,298.3 1002.7,297.2 1011.4,297.1 1020.2,297.1 1028.9,297.2 1037.6,297.3 1046.4,297.8 1055.1,297.8 1063.9,298.1 1072.6,297.4 1081.3,297.8 1090.1,297.1 1098.8,298.0 1107.6,297.9 1116.3,298.2" fill="none" stroke="#8a63c0" stroke-width="1.0" stroke-linejoin="round"/><polyline points="67.6,296.6 76.3,296.4 85.1,297.3 93.8,296.4 102.6,296.5 111.3,297.3 120.0,296.5 128.8,296.5 137.5,297.2 146.3,296.4 155.0,297.0 163.7,296.9 172.5,296.7 181.2,296.7 189.9,296.6 198.7,297.1 207.4,296.9 216.2,297.2 224.9,297.1 233.6,296.9 242.4,297.3 251.1,297.0 259.9,296.5 268.6,297.2 277.3,296.9 286.1,297.3 294.8,296.6 303.6,297.2 312.3,297.2 321.0,296.6 329.8,296.9 338.5,296.8 347.3,296.7 356.0,296.9 364.7,296.9 373.5,297.2 382.2,297.2 390.9,297.1 399.7,297.1 408.4,297.0 417.2,296.5 425.9,297.1 434.6,297.2 443.4,297.1 452.1,297.2 460.9,296.5 469.6,296.4 478.3,296.6 487.1,296.4 495.8,296.8 504.6,296.9 513.3,297.0 522.0,296.7 530.8,297.1 539.5,296.8 548.3,297.0 557.0,296.7 565.7,296.5 574.5,296.7 583.2,297.2 592.0,296.8 600.7,296.6 609.4,296.8 618.2,297.3 626.9,297.2 635.6,296.8 644.4,296.6 653.1,296.9 661.9,296.6 670.6,296.8 679.3,296.5 688.1,297.1 696.8,296.5 705.6,296.6 714.3,297.2 723.0,297.1 731.8,297.1 740.5,296.6 749.3,296.7 758.0,297.3 766.7,296.6 775.5,297.0 784.2,296.5 793.0,297.1 801.7,297.2 810.4,297.0 819.2,296.9 827.9,296.9 836.6,296.8 845.4,297.2 854.1,297.1 862.9,297.3 871.6,296.4 880.3,296.9 889.1,297.1 897.8,297.2 906.6,296.7 915.3,297.3 924.0,297.2 932.8,296.7 941.5,296.8 950.3,296.6 959.0,296.5 967.7,297.0 976.5,296.6 985.2,296.5 994.0,296.5 1002.7,296.8 1011.4,296.6 1020.2,297.3 1028.9,297.2 1037.6,296.8 1046.4,296.8 1055.1,296.7 1063.9,296.9 1072.6,297.3 1081.3,297.0 1090.1,297.1 1098.8,296.7 1107.6,297.1 1116.3,296.6" fill="none" stroke="#3f8fd6" stroke-width="2.2" stroke-linejoin="round"/><polyline points="67.6,299.6 76.3,299.6 85.1,299.6 93.8,299.6 102.6,299.6 111.3,299.6 120.0,299.6 128.8,299.6 137.5,294.6 146.3,299.6 155.0,299.6 163.7,299.6 172.5,299.6 181.2,299.6 189.9,299.6 198.7,299.6 207.4,299.6 216.2,299.6 224.9,299.6 233.6,299.6 242.4,299.6 251.1,299.6 259.9,299.6 268.6,299.6 277.3,299.6 286.1,294.6 294.8,299.6 303.6,299.6 312.3,299.6 321.0,299.6 329.8,299.6 338.5,299.6 347.3,299.6 356.0,299.6 364.7,299.6 373.5,299.6 382.2,299.6 390.9,299.6 399.7,299.6 408.4,299.6 417.2,299.6 425.9,299.6 434.6,294.6 443.4,299.6 452.1,299.6 460.9,299.6 469.6,299.6 478.3,299.6 487.1,299.6 495.8,299.6 504.6,299.6 513.3,299.6 522.0,299.6 530.8,299.6 539.5,299.6 548.3,299.6 557.0,299.6 565.7,299.6 574.5,299.6 583.2,294.6 592.0,299.6 600.7,299.6 609.4,299.6 618.2,299.6 626.9,299.6 635.6,299.6 644.4,299.6 653.1,299.6 661.9,299.6 670.6,299.6 679.3,299.6 688.1,299.6 696.8,299.6 705.6,299.6 714.3,299.6 723.0,299.6 731.8,294.6 740.5,299.6 749.3,299.6 758.0,299.6 766.7,299.6 775.5,299.6 784.2,299.6 793.0,299.6 801.7,299.6 810.4,299.6 819.2,299.6 827.9,299.6 836.6,299.6 845.4,299.6 854.1,299.6 862.9,299.6 871.6,299.6 880.3,294.6 889.1,299.6 897.8,299.6 906.6,299.6 915.3,299.6 924.0,299.6 932.8,299.6 941.5,299.6 950.3,299.6 959.0,299.6 967.7,299.6 976.5,299.6 985.2,299.6 994.0,299.6 1002.7,299.6 1011.4,299.6 1020.2,299.6 1028.9,294.6 1037.6,299.6 1046.4,299.6 1055.1,299.6 1063.9,299.6 1072.6,299.6 1081.3,299.6 1090.1,299.6 1098.8,299.6 1107.6,299.6 1116.3,299.6" fill="none" stroke="#2d5a42" stroke-width="1.3" stroke-linejoin="round"/><polyline points="67.6,297.8 76.3,297.8 85.1,297.8 93.8,297.8 102.6,297.8 111.3,297.8 120.0,297.8 128.8,297.8 137.5,297.8 146.3,297.8 155.0,297.8 163.7,297.8 172.5,297.8 181.2,297.8 189.9,292.4 198.7,297.8 207.4,297.8 216.2,297.8 224.9,297.8 233.6,297.8 242.4,297.8 251.1,297.8 259.9,297.8 268.6,297.8 277.3,297.8 286.1,297.8 294.8,297.8 303.6,297.8 312.3,297.8 321.0,297.8 329.8,297.8 338.5,297.8 347.3,297.8 356.0,297.8 364.7,297.8 373.5,297.8 382.2,297.8 390.9,297.8 399.7,297.8 408.4,297.8 417.2,297.8 425.9,292.4 434.6,297.8 443.4,297.8 452.1,297.8 460.9,297.8 469.6,297.8 478.3,297.8 487.1,297.8 495.8,297.8 504.6,297.8 513.3,297.8 522.0,297.8 530.8,297.8 539.5,297.8 548.3,297.8 557.0,297.8 565.7,297.8 574.5,297.8 583.2,297.8 592.0,297.8 600.7,297.8 609.4,297.8 618.2,297.8 626.9,297.8 635.6,297.8 644.4,297.8 653.1,297.8 661.9,292.4 670.6,297.8 679.3,297.8 688.1,297.8 696.8,297.8 705.6,297.8 714.3,297.8 723.0,297.8 731.8,297.8 740.5,297.8 749.3,297.8 758.0,297.8 766.7,297.8 775.5,297.8 784.2,297.8 793.0,297.8 801.7,297.8 810.4,297.8 819.2,297.8 827.9,297.8 836.6,297.8 845.4,297.8 854.1,297.8 862.9,297.8 871.6,297.8 880.3,297.8 889.1,297.8 897.8,292.4 906.6,297.8 915.3,297.8 924.0,297.8 932.8,297.8 941.5,297.8 950.3,297.8 959.0,297.8 967.7,297.8 976.5,297.8 985.2,297.8 994.0,297.8 1002.7,297.8 1011.4,297.8 1020.2,297.8 1028.9,297.8 1037.6,297.8 1046.4,297.8 1055.1,297.8 1063.9,297.8 1072.6,297.8 1081.3,297.8 1090.1,297.8 1098.8,297.8 1107.6,297.8 1116.3,297.8" fill="none" stroke="#d04fa0" stroke-width="1.2" stroke-linejoin="round"/><polyline points="67.6,296.2 76.3,295.9 85.1,295.8 93.8,296.4 102.6,295.9 111.3,295.2 120.0,295.8 128.8,295.8 137.5,295.4 146.3,295.9 155.0,296.2 163.7,295.3 172.5,296.3 181.2,295.3 189.9,295.3 198.7,295.8 207.4,295.8 216.2,296.5 224.9,296.3 233.6,295.4 242.4,295.5 251.1,295.7 259.9,296.4 268.6,295.5 277.3,295.1 286.1,295.3 294.8,295.6 303.6,295.9 312.3,296.0 321.0,296.4 329.8,296.5 338.5,295.2 347.3,296.0 356.0,296.0 364.7,295.9 373.5,295.1 382.2,295.2 390.9,295.6 399.7,295.4 408.4,295.8 417.2,295.6 425.9,295.4 434.6,295.6 443.4,296.5 452.1,295.9 460.9,295.7 469.6,295.6 478.3,295.2 487.1,295.4 495.8,296.0 504.6,295.9 513.3,295.4 522.0,295.5 530.8,296.1 539.5,296.0 548.3,295.7 557.0,295.9 565.7,295.6 574.5,295.3 583.2,296.0 592.0,295.7 600.7,296.3 609.4,295.4 618.2,295.6 626.9,295.7 635.6,296.1 644.4,296.5 653.1,296.2 661.9,296.2 670.6,295.5 679.3,295.7 688.1,295.3 696.8,295.2 705.6,296.2 714.3,296.4 723.0,295.5 731.8,296.0 740.5,295.4 749.3,295.9 758.0,296.3 766.7,295.2 775.5,295.5 784.2,295.4 793.0,295.5 801.7,295.2 810.4,295.3 819.2,296.5 827.9,296.5 836.6,296.5 845.4,295.5 854.1,295.9 862.9,295.5 871.6,296.5 880.3,296.3 889.1,295.3 897.8,295.7 906.6,296.4 915.3,296.4 924.0,295.4 932.8,295.3 941.5,296.4 950.3,295.1 959.0,296.4 967.7,296.0 976.5,295.7 985.2,295.4 994.0,295.3 1002.7,296.6 1011.4,296.2 1020.2,296.4 1028.9,296.5 1037.6,295.6 1046.4,296.4 1055.1,296.0 1063.9,295.6 1072.6,295.4 1081.3,295.8 1090.1,295.6 1098.8,295.6 1107.6,296.3 1116.3,296.3" fill="none" stroke="#43a0c8" stroke-width="1.6" stroke-linejoin="round"/><polyline points="67.6,294.5 76.3,295.3 85.1,294.6 93.8,295.5 102.6,295.1 111.3,295.4 120.0,295.0 128.8,295.7 137.5,295.2 146.3,295.4 155.0,295.8 163.7,294.6 172.5,294.5 181.2,295.6 189.9,294.9 198.7,295.1 207.4,295.2 216.2,295.0 224.9,294.9 233.6,295.4 242.4,295.3 251.1,295.1 259.9,294.4 268.6,294.5 277.3,294.7 286.1,295.2 294.8,294.5 303.6,294.4 312.3,294.5 321.0,295.6 329.8,295.2 338.5,295.5 347.3,295.2 356.0,294.6 364.7,295.1 373.5,295.4 382.2,295.6 390.9,295.6 399.7,294.6 408.4,294.4 417.2,294.5 425.9,295.8 434.6,295.5 443.4,295.6 452.1,295.2 460.9,295.6 469.6,295.1 478.3,295.2 487.1,294.9 495.8,295.1 504.6,295.1 513.3,295.8 522.0,294.5 530.8,295.2 539.5,294.6 548.3,295.4 557.0,295.7 565.7,294.4 574.5,295.1 583.2,295.6 592.0,294.4 600.7,294.5 609.4,295.7 618.2,294.4 626.9,295.7 635.6,295.7 644.4,295.6 653.1,294.5 661.9,295.0 670.6,295.0 679.3,294.8 688.1,295.4 696.8,295.8 705.6,295.7 714.3,295.5 723.0,295.0 731.8,295.7 740.5,295.8 749.3,295.6 758.0,295.8 766.7,295.8 775.5,295.7 784.2,295.7 793.0,295.4 801.7,294.6 810.4,294.9 819.2,295.8 827.9,295.7 836.6,295.4 845.4,295.2 854.1,295.2 862.9,295.1 871.6,294.8 880.3,294.9 889.1,295.5 897.8,295.4 906.6,294.4 915.3,295.1 924.0,294.5 932.8,294.5 941.5,294.6 950.3,294.9 959.0,294.8 967.7,295.4 976.5,295.5 985.2,295.3 994.0,295.6 1002.7,295.6 1011.4,295.7 1020.2,295.6 1028.9,295.8 1037.6,295.7 1046.4,294.8 1055.1,295.8 1063.9,294.8 1072.6,294.8 1081.3,295.6 1090.1,295.1 1098.8,295.0 1107.6,294.5 1116.3,294.9" fill="none" stroke="#7a6a70" stroke-width="1.2" stroke-linejoin="round"/><polyline points="67.6,294.2 76.3,294.8 85.1,294.0 93.8,294.5 102.6,294.6 111.3,294.4 120.0,294.8 128.8,294.8 137.5,294.6 146.3,294.8 155.0,294.3 163.7,294.6 172.5,294.6 181.2,294.7 189.9,294.8 198.7,294.3 207.4,294.1 216.2,294.6 224.9,294.2 233.6,294.7 242.4,294.2 251.1,294.7 259.9,294.4 268.6,294.6 277.3,294.1 286.1,294.2 294.8,294.9 303.6,294.9 312.3,294.5 321.0,294.8 329.8,294.7 338.5,294.0 347.3,294.1 356.0,295.0 364.7,295.0 373.5,294.4 382.2,294.0 390.9,294.1 399.7,294.3 408.4,294.3 417.2,294.5 425.9,294.5 434.6,294.1 443.4,294.9 452.1,294.3 460.9,294.3 469.6,294.8 478.3,294.2 487.1,294.8 495.8,294.0 504.6,294.2 513.3,294.5 522.0,294.4 530.8,294.0 539.5,294.6 548.3,294.8 557.0,294.3 565.7,294.1 574.5,294.8 583.2,294.2 592.0,294.6 600.7,294.3 609.4,294.5 618.2,294.0 626.9,294.4 635.6,294.0 644.4,294.0 653.1,294.9 661.9,294.1 670.6,294.2 679.3,294.8 688.1,294.4 696.8,294.7 705.6,294.9 714.3,294.9 723.0,294.6 731.8,294.1 740.5,294.9 749.3,294.4 758.0,294.1 766.7,294.6 775.5,294.3 784.2,294.4 793.0,294.2 801.7,294.5 810.4,294.0 819.2,294.6 827.9,294.8 836.6,294.9 845.4,294.7 854.1,294.9 862.9,294.1 871.6,294.9 880.3,294.2 889.1,294.2 897.8,294.5 906.6,294.9 915.3,294.8 924.0,294.1 932.8,294.6 941.5,294.2 950.3,294.9 959.0,294.9 967.7,294.6 976.5,294.6 985.2,294.8 994.0,294.3 1002.7,294.4 1011.4,294.4 1020.2,294.7 1028.9,294.6 1037.6,294.7 1046.4,294.4 1055.1,294.6 1063.9,294.3 1072.6,294.0 1081.3,294.7 1090.1,294.4 1098.8,294.9 1107.6,294.2 1116.3,294.5" fill="none" stroke="#a8683a" stroke-width="1.4" stroke-linejoin="round"/><polyline points="67.6,293.5 76.3,293.5 85.1,293.5 93.8,289.5 102.6,288.5 111.3,289.5 120.0,293.5 128.8,293.5 137.5,293.5 146.3,290.5 155.0,293.5 163.7,293.5 172.5,293.5 181.2,293.5 189.9,293.5 198.7,293.5 207.4,293.5 216.2,293.5 224.9,293.5 233.6,293.5 242.4,293.5 251.1,293.5 259.9,293.5 268.6,293.5 277.3,293.5 286.1,293.5 294.8,290.5 303.6,293.5 312.3,293.5 321.0,289.5 329.8,288.5 338.5,289.5 347.3,293.5 356.0,293.5 364.7,293.5 373.5,293.5 382.2,293.5 390.9,293.5 399.7,293.5 408.4,293.5 417.2,293.5 425.9,293.5 434.6,293.5 443.4,290.5 452.1,293.5 460.9,293.5 469.6,293.5 478.3,293.5 487.1,293.5 495.8,293.5 504.6,293.5 513.3,293.5 522.0,293.5 530.8,293.5 539.5,293.5 548.3,289.5 557.0,288.5 565.7,289.5 574.5,293.5 583.2,293.5 592.0,290.5 600.7,293.5 609.4,293.5 618.2,293.5 626.9,293.5 635.6,293.5 644.4,293.5 653.1,293.5 661.9,293.5 670.6,293.5 679.3,293.5 688.1,293.5 696.8,293.5 705.6,293.5 714.3,293.5 723.0,293.5 731.8,293.5 740.5,290.5 749.3,293.5 758.0,293.5 766.7,293.5 775.5,289.5 784.2,288.5 793.0,289.5 801.7,293.5 810.4,293.5 819.2,293.5 827.9,293.5 836.6,293.5 845.4,293.5 854.1,293.5 862.9,293.5 871.6,293.5 880.3,293.5 889.1,290.5 897.8,293.5 906.6,293.5 915.3,293.5 924.0,293.5 932.8,293.5 941.5,293.5 950.3,293.5 959.0,293.5 967.7,293.5 976.5,293.5 985.2,293.5 994.0,293.5 1002.7,289.5 1011.4,288.5 1020.2,289.5 1028.9,293.5 1037.6,290.5 1046.4,293.5 1055.1,293.5 1063.9,293.5 1072.6,293.5 1081.3,293.5 1090.1,293.5 1098.8,293.5 1107.6,293.5 1116.3,293.5" fill="none" stroke="#3b7dd8" stroke-width="1.7" stroke-linejoin="round"/><polyline points="67.6,293.5 76.3,292.9 85.1,293.0 93.8,293.5 102.6,293.1 111.3,293.3 120.0,292.8 128.8,292.9 137.5,293.3 146.3,293.1 155.0,293.1 163.7,293.3 172.5,293.2 181.2,293.2 189.9,293.1 198.7,292.8 207.4,293.0 216.2,293.5 224.9,293.2 233.6,292.8 242.4,292.9 251.1,293.0 259.9,293.0 268.6,293.0 277.3,293.4 286.1,293.2 294.8,293.3 303.6,293.4 312.3,293.0 321.0,293.5 329.8,293.4 338.5,293.0 347.3,292.8 356.0,293.3 364.7,292.9 373.5,292.9 382.2,293.4 390.9,292.8 399.7,293.4 408.4,293.1 417.2,293.4 425.9,293.4 434.6,293.0 443.4,292.9 452.1,293.4 460.9,293.3 469.6,293.0 478.3,293.1 487.1,293.4 495.8,293.0 504.6,293.4 513.3,292.8 522.0,293.0 530.8,293.0 539.5,292.8 548.3,293.3 557.0,293.3 565.7,293.0 574.5,292.8 583.2,292.8 592.0,292.9 600.7,293.0 609.4,293.2 618.2,292.9 626.9,293.0 635.6,292.8 644.4,292.9 653.1,293.1 661.9,293.0 670.6,293.3 679.3,293.3 688.1,292.9 696.8,293.0 705.6,293.5 714.3,293.3 723.0,293.2 731.8,293.1 740.5,293.2 749.3,293.2 758.0,292.8 766.7,293.2 775.5,293.2 784.2,292.8 793.0,293.3 801.7,293.1 810.4,293.4 819.2,292.9 827.9,292.9 836.6,293.3 845.4,293.0 854.1,293.3 862.9,292.9 871.6,293.1 880.3,293.3 889.1,292.8 897.8,293.1 906.6,293.1 915.3,292.8 924.0,293.3 932.8,293.2 941.5,292.8 950.3,293.2 959.0,292.9 967.7,293.0 976.5,292.8 985.2,293.1 994.0,292.8 1002.7,293.1 1011.4,293.3 1020.2,293.2 1028.9,293.1 1037.6,293.0 1046.4,293.2 1055.1,293.2 1063.9,293.3 1072.6,293.1 1081.3,293.0 1090.1,293.0 1098.8,293.5 1107.6,293.3 1116.3,293.0" fill="none" stroke="#e8742a" stroke-width="2.5" stroke-linejoin="round"/><polyline points="67.6,292.5 76.3,292.7 85.1,292.1 93.8,292.5 102.6,292.1 111.3,292.6 120.0,291.8 128.8,292.1 137.5,292.5 146.3,292.7 155.0,291.9 163.7,291.9 172.5,292.4 181.2,292.6 189.9,291.8 198.7,291.9 207.4,292.3 216.2,292.6 224.9,292.0 233.6,291.8 242.4,292.5 251.1,292.4 259.9,291.9 268.6,292.0 277.3,291.8 286.1,292.1 294.8,292.5 303.6,291.8 312.3,291.9 321.0,291.9 329.8,292.4 338.5,292.5 347.3,291.8 356.0,291.8 364.7,292.7 373.5,292.7 382.2,292.6 390.9,292.1 399.7,292.5 408.4,292.6 417.2,292.2 425.9,291.8 434.6,292.3 443.4,292.7 452.1,292.6 460.9,292.5 469.6,292.4 478.3,292.5 487.1,292.7 495.8,292.4 504.6,292.5 513.3,292.5 522.0,292.7 530.8,292.2 539.5,292.0 548.3,292.4 557.0,292.6 565.7,292.3 574.5,292.7 583.2,292.6 592.0,292.5 600.7,291.9 609.4,292.7 618.2,292.3 626.9,292.7 635.6,292.4 644.4,291.8 653.1,291.9 661.9,292.3 670.6,292.5 679.3,292.5 688.1,292.2 696.8,292.3 705.6,292.5 714.3,292.7 723.0,292.0 731.8,291.8 740.5,291.8 749.3,292.2 758.0,292.4 766.7,292.6 775.5,291.8 784.2,292.3 793.0,292.7 801.7,291.8 810.4,292.1 819.2,292.0 827.9,292.2 836.6,292.5 845.4,292.0 854.1,292.0 862.9,292.2 871.6,291.8 880.3,292.6 889.1,291.8 897.8,292.2 906.6,292.6 915.3,291.9 924.0,291.9 932.8,291.9 941.5,292.3 950.3,292.2 959.0,292.2 967.7,292.0 976.5,292.3 985.2,292.6 994.0,292.4 1002.7,292.4 1011.4,292.7 1020.2,292.6 1028.9,292.1 1037.6,292.2 1046.4,292.6 1055.1,291.9 1063.9,292.7 1072.6,292.8 1081.3,292.1 1090.1,291.9 1098.8,291.9 1107.6,292.1 1116.3,292.3" fill="none" stroke="#e89a5a" stroke-width="1.0" stroke-linejoin="round"/><polyline points="601.6,284.7 607.6,280.5 615.6,290.9" fill="none" stroke="#e8742a" stroke-width="1.4" stroke-linejoin="round"/><rect x="63.7" y="303.6" width="8.6" height="9.8" rx="3.9" fill="#bc341c"/><rect x="165.7" y="303.6" width="8.6" height="9.8" rx="3.9" fill="#357ab8"/><rect x="177.9" y="303.6" width="8.6" height="9.8" rx="3.9" fill="#bc341c"/><rect x="236.1" y="303.6" width="8.6" height="9.8" rx="3.9" fill="#357ab8"/><rect x="428.2" y="303.6" width="8.6" height="9.8" rx="3.9" fill="#357ab8"/></svg><span class="t" style="left:83.55px;top:749.00px;font-size:15.4px;color:#666;font-family:'DejaVu Sans Mono','Liberation Mono',monospace;">1k</span><span class="t" style="left:74.29px;top:798.00px;font-size:15.4px;color:#666;font-family:'DejaVu Sans Mono','Liberation Mono',monospace;">.8k</span><span class="t" style="left:74.29px;top:848.00px;font-size:15.4px;color:#666;font-family:'DejaVu Sans Mono','Liberation Mono',monospace;">.6k</span><span class="t" style="left:74.29px;top:898.00px;font-size:15.4px;color:#666;font-family:'DejaVu Sans Mono','Liberation Mono',monospace;">.4k</span><span class="t" style="left:74.29px;top:948.00px;font-size:15.4px;color:#666;font-family:'DejaVu Sans Mono','Liberation Mono',monospace;">.2k</span><span class="t" style="left:92.82px;top:997.00px;font-size:15.4px;color:#666;font-family:'DejaVu Sans Mono','Liberation Mono',monospace;">0</span><span class="t" style="left:146.85px;top:1020.00px;font-size:16.7px;color:#666;letter-spacing:-0.512px;">11:30 AM</span><span class="t" style="left:279.35px;top:1020.00px;font-size:16.7px;color:#666;letter-spacing:-0.569px;">11:45 AM</span><span class="t" style="left:409.35px;top:1020.00px;font-size:16.7px;color:#666;letter-spacing:-0.220px;">12:00 PM</span><span class="t" style="left:545.35px;top:1020.00px;font-size:16.7px;color:#666;letter-spacing:-1.277px;">12:15 PM</span><span class="t" style="left:674.95px;top:1020.00px;font-size:16.7px;color:#666;letter-spacing:-0.505px;">12:30 PM</span><span class="t" style="left:807.70px;top:1020.00px;font-size:16.7px;color:#666;letter-spacing:-0.634px;">12:45 PM</span><span class="t" style="left:938.25px;top:1020.00px;font-size:16.7px;color:#666;letter-spacing:-0.134px;">01:00 PM</span><span class="t" style="left:1073.65px;top:1020.00px;font-size:16.7px;color:#666;letter-spacing:-1.020px;">01:15 PM</span><div class="abs" style="left:121.3px;top:853.2px;width:0;height:0;transform:rotate(-90deg)"><span class="t" style="left:0.00px;top:-7.00px;font-size:15.2px;color:rgba(110,95,90,.62);letter-spacing:0.340px;font-family:'DejaVu Sans Mono','Liberation Mono',monospace;">millicores</span></div><section class="card" style="left:1220.9px;top:701.8px;width:1142px;height:345.6px"></section><h3 class="t" style="left:1251.10px;top:717.00px;font-size:18.2px;color:#22313f;font-weight:700;letter-spacing:0.878px;">Memory Page Usage by Pod Container</h3><svg style="left:2327.2px;top:715.2px" width="10" height="29.2" viewBox="0 0 10 29.2"><g fill="#444"><circle cx="5" cy="5" r="2.15"/><circle cx="5" cy="14.6" r="2.15"/><circle cx="5" cy="24.2" r="2.15"/></g></svg><svg style="left:1221.7px;top:701.9px" width="1140.5" height="344.8" viewBox="0 0 1140.5 344.8"><rect x="66.6" y="50.2" width="1056.7" height="256.1" fill="#eecbc2"/><path d="M83.6 308.1 H1124.3" stroke="#e6e6e6" stroke-width="1.5"/><path d="M66.6 82.6 H1125.3 M66.6 119.4 H1125.3 M66.6 156.2 H1125.3 M66.6 193.0 H1125.3 M66.6 229.8 H1125.3 M66.6 266.6 H1125.3 M66.6 303.4 H1125.3 M139.0 52.2 V308.3 M271.3 52.2 V308.3 M403.6 52.2 V308.3 M535.9 52.2 V308.3 M668.2 52.2 V308.3 M800.5 52.2 V308.3 M932.8 52.2 V308.3 M1065.1 52.2 V308.3 M170.0 52.2 V306.3 M240.4 52.2 V306.3 M432.5 52.2 V306.3 " stroke="rgba(110,80,80,.21)" stroke-width="1.2" fill="none"/><path d="M181.9 52.2 V306.3" stroke="rgba(225,120,110,.30)" stroke-width="1.2"/><polyline points="67.6,55.4 76.3,55.4 85.1,55.5 93.8,55.5 102.6,55.6 111.3,55.6 120.0,55.7 128.8,55.7 137.5,55.7 146.3,55.7 155.0,55.7 163.7,55.7 172.5,55.7 181.2,55.6 189.9,55.6 198.7,55.6 207.4,55.5 216.2,55.5 224.9,55.4 233.6,55.4 242.4,55.3 251.1,55.3 259.9,55.2 268.6,55.2 277.3,55.2 286.1,55.1 294.8,55.1 303.6,55.1 312.3,55.1 321.0,55.1 329.8,55.1 338.5,55.1 347.3,55.2 356.0,55.2 364.7,55.2 373.5,55.3 382.2,55.3 390.9,55.4 399.7,55.4 408.4,55.5 417.2,55.5 425.9,55.6 434.6,55.6 443.4,55.6 452.1,55.7 460.9,55.7 469.6,55.7 478.3,55.7 487.1,55.7 495.8,55.7 504.6,55.7 513.3,55.6 522.0,55.6 530.8,55.6 539.5,55.5 548.3,55.5 557.0,55.4 565.7,55.4 574.5,55.3 583.2,55.3 592.0,55.2 600.7,55.2 609.4,55.2 618.2,55.1 626.9,55.1 635.6,55.1 644.4,55.1 653.1,55.1 661.9,55.1 670.6,55.1 679.3,55.2 688.1,55.2 696.8,55.2 705.6,55.3 714.3,55.3 723.0,55.4 731.8,55.4 740.5,55.5 749.3,55.5 758.0,55.6 766.7,55.6 775.5,55.6 784.2,55.7 793.0,55.7 801.7,55.7 810.4,55.7 819.2,55.7 827.9,55.7 836.6,55.7 845.4,55.6 854.1,55.6 862.9,55.6 871.6,55.5 880.3,55.5 889.1,55.4 897.8,55.4 906.6,55.3 915.3,55.3 924.0,55.2 932.8,55.2 941.5,55.2 950.3,55.1 959.0,55.1 967.7,55.1 976.5,55.1 985.2,55.1 994.0,55.1 1002.7,55.1 1011.4,55.2 1020.2,55.2 1028.9,55.3 1037.6,55.3 1046.4,55.3 1055.1,55.4 1063.9,55.4 1072.6,55.5 1081.3,55.5 1090.1,55.6 1098.8,55.6 1107.6,55.6 1116.3,55.7" fill="none" stroke="#a8762f" stroke-width="1.9" stroke-linejoin="round"/><polyline points="66.6,233.9 1115.3,233.9" fill="none" stroke="#d0509a" stroke-width="2.2" stroke-linejoin="round"/><polyline points="66.6,236.3 1115.3,236.3" fill="none" stroke="#4a9bd6" stroke-width="2.2" stroke-linejoin="round"/><polyline points="66.6,244.9 78.6,244.9 146.6,242.7 1115.3,240.7" fill="none" stroke="#a8762f" stroke-width="1.9" stroke-linejoin="round"/><polyline points="66.6,289.0 1115.3,289.0" fill="none" stroke="#9aa0a0" stroke-width="1.0" stroke-linejoin="round"/><polyline points="66.6,290.9 1115.3,290.9" fill="none" stroke="#8fb0b0" stroke-width="1.0" stroke-linejoin="round"/><polyline points="66.6,241.6 72.6,243.0 85.1,292.8 93.8,242.5 102.6,261.9 111.3,242.6 120.0,228.3 128.8,292.9 137.5,222.4 146.3,264.8 155.0,239.3 163.7,292.8 172.5,237.2 181.2,293.8 189.9,280.1 198.7,294.0 207.4,294.1 216.2,292.6 224.9,292.9 233.6,245.2 242.4,292.7 251.1,226.6 259.9,293.8 268.6,248.4 277.3,294.5 286.1,224.1 294.8,293.5 303.6,242.8 312.3,293.3 321.0,294.2 329.8,250.6 338.5,293.2 347.3,279.1 356.0,292.9 364.7,231.8 373.5,292.5 382.2,224.8 390.9,207.7 399.7,273.1 408.4,294.2 417.2,229.4 425.9,292.7 434.6,271.7 443.4,294.2 452.1,251.5 460.9,292.9 469.6,249.6 478.3,293.0 487.1,253.6 495.8,292.6 504.6,262.1 513.3,293.9 522.0,255.9 530.8,225.0 539.5,232.6 548.3,293.3 557.0,249.6 565.7,294.3 574.5,280.5 583.2,294.3 592.0,293.1 600.7,240.3 609.4,294.1 618.2,268.8 626.9,293.4 635.6,227.0 644.4,292.8 653.1,246.7 661.9,294.2 670.6,294.0 679.3,293.9 688.1,271.1 696.8,293.9 705.6,225.2 714.3,235.9 723.0,292.4 731.8,235.4 740.5,294.4 749.3,292.4 758.0,248.4 766.7,278.9 775.5,292.9 784.2,247.7 793.0,293.6 801.7,268.0 810.4,294.5 819.2,258.0 827.9,293.0 836.6,268.6 845.4,293.2 854.1,294.4 862.9,230.8 871.6,292.8 880.3,292.9 889.1,292.7 897.8,293.1 906.6,238.8 915.3,292.7 924.0,215.1 932.8,271.0 941.5,294.2 950.3,271.3 959.0,292.9 967.7,249.7 976.5,294.1 985.2,231.6 994.0,292.5 1002.7,253.3 1011.4,293.1 1020.2,241.5 1028.9,292.5 1037.6,260.9 1046.4,294.2 1055.1,275.1 1063.9,294.5 1072.6,292.5 1081.3,294.5 1090.1,261.2 1098.8,294.0 1107.6,245.9 1116.3,235.0" fill="none" stroke="#44a0a8" stroke-width="1.8" stroke-linejoin="round"/><polyline points="67.6,293.3 76.3,293.8 85.1,292.9 93.8,293.9 102.6,293.3 111.3,292.8 120.0,293.5 128.8,293.3 137.5,293.7 146.3,294.1 155.0,293.1 163.7,293.0 172.5,293.4 181.2,294.0 189.9,286.1 198.7,293.9 207.4,293.1 216.2,287.1 224.9,287.2 233.6,286.8 242.4,293.6 251.1,287.4 259.9,286.3 268.6,293.4 277.3,287.4 286.1,287.1 294.8,287.2 303.6,287.3 312.3,293.5 321.0,293.7 329.8,293.0 338.5,294.1 347.3,293.6 356.0,294.0 364.7,294.2 373.5,293.5 382.2,292.9 390.9,294.0 399.7,293.3 408.4,287.4 417.2,293.1 425.9,293.6 434.6,293.8 443.4,292.8 452.1,294.2 460.9,293.0 469.6,294.0 478.3,286.5 487.1,293.8 495.8,293.1 504.6,293.0 513.3,293.0 522.0,292.9 530.8,293.3 539.5,292.9 548.3,293.1 557.0,287.4 565.7,293.3 574.5,293.9 583.2,286.2 592.0,286.2 600.7,293.4 609.4,293.2 618.2,286.2 626.9,292.9 635.6,294.0 644.4,287.5 653.1,293.0 661.9,287.4 670.6,293.0 679.3,292.9 688.1,293.1 696.8,294.2 705.6,286.3 714.3,293.7 723.0,287.1 731.8,293.5 740.5,293.9 749.3,287.3 758.0,287.4 766.7,294.0 775.5,293.4 784.2,293.3 793.0,287.5 801.7,287.1 810.4,293.8 819.2,293.0 827.9,286.9 836.6,293.8 845.4,293.9 854.1,287.3 862.9,293.7 871.6,286.1 880.3,292.8 889.1,293.0 897.8,287.2 906.6,293.4 915.3,293.6 924.0,294.1 932.8,293.9 941.5,286.3 950.3,293.0 959.0,293.1 967.7,293.3 976.5,286.6 985.2,293.0 994.0,293.6 1002.7,286.4 1011.4,287.3 1020.2,287.3 1028.9,293.5 1037.6,287.0 1046.4,294.1 1055.1,286.8 1063.9,292.8 1072.6,294.1 1081.3,292.7 1090.1,293.4 1098.8,293.3 1107.6,292.7 1116.3,293.5" fill="none" stroke="#d0509a" stroke-width="1.2" stroke-linejoin="round"/><polyline points="66.6,284.1 1095.3,284.1" fill="none" stroke="#f05a5a" stroke-width="2.6" stroke-linejoin="round"/><polyline points="66.6,286.0 1121.3,286.0" fill="none" stroke="#e8843a" stroke-width="1.5" stroke-linejoin="round"/><polyline points="66.6,292.9 1115.3,292.9" fill="none" stroke="#3fa0b0" stroke-width="3.0" stroke-linejoin="round"/><polyline points="66.6,294.9 1117.3,294.9" fill="none" stroke="#d08040" stroke-width="1.2" stroke-linejoin="round"/><polyline points="66.6,296.8 1119.3,296.8" fill="none" stroke="#3366cc" stroke-width="3.0" stroke-linejoin="round"/><polyline points="66.6,299.2 1119.3,299.2" fill="none" stroke="#8060c0" stroke-width="2.4" stroke-linejoin="round"/><polyline points="66.6,301.2 1119.3,301.2" fill="none" stroke="#c8703a" stroke-width="2.0" stroke-linejoin="round"/><rect x="63.7" y="303.6" width="8.6" height="9.8" rx="3.9" fill="#bc341c"/><rect x="165.7" y="303.6" width="8.6" height="9.8" rx="3.9" fill="#357ab8"/><rect x="177.9" y="303.6" width="8.6" height="9.8" rx="3.9" fill="#bc341c"/><rect x="236.1" y="303.6" width="8.6" height="9.8" rx="3.9" fill="#357ab8"/><rect x="428.2" y="303.6" width="8.6" height="9.8" rx="3.9" fill="#357ab8"/></svg><span class="t" style="left:1264.55px;top:776.00px;font-size:15.4px;color:#666;font-family:'DejaVu Sans Mono','Liberation Mono',monospace;">3G</span><span class="t" style="left:1246.02px;top:813.00px;font-size:15.4px;color:#666;font-family:'DejaVu Sans Mono','Liberation Mono',monospace;">2.5G</span><span class="t" style="left:1264.55px;top:850.00px;font-size:15.4px;color:#666;font-family:'DejaVu Sans Mono','Liberation Mono',monospace;">2G</span><span class="t" style="left:1246.02px;top:887.00px;font-size:15.4px;color:#666;font-family:'DejaVu Sans Mono','Liberation Mono',monospace;">1.5G</span><span class="t" style="left:1264.55px;top:924.00px;font-size:15.4px;color:#666;font-family:'DejaVu Sans Mono','Liberation Mono',monospace;">1G</span><span class="t" style="left:1255.29px;top:960.00px;font-size:15.4px;color:#666;font-family:'DejaVu Sans Mono','Liberation Mono',monospace;">.5G</span><span class="t" style="left:1273.82px;top:997.00px;font-size:15.4px;color:#666;font-family:'DejaVu Sans Mono','Liberation Mono',monospace;">0</span><span class="t" style="left:1327.85px;top:1020.00px;font-size:16.7px;color:#666;letter-spacing:-0.512px;">11:30 AM</span><span class="t" style="left:1460.35px;top:1020.00px;font-size:16.7px;color:#666;letter-spacing:-0.569px;">11:45 AM</span><span class="t" style="left:1590.35px;top:1020.00px;font-size:16.7px;color:#666;letter-spacing:-0.220px;">12:00 PM</span><span class="t" style="left:1726.35px;top:1020.00px;font-size:16.7px;color:#666;letter-spacing:-1.277px;">12:15 PM</span><span class="t" style="left:1855.95px;top:1020.00px;font-size:16.7px;color:#666;letter-spacing:-0.505px;">12:30 PM</span><span class="t" style="left:1988.70px;top:1020.00px;font-size:16.7px;color:#666;letter-spacing:-0.634px;">12:45 PM</span><span class="t" style="left:2119.25px;top:1020.00px;font-size:16.7px;color:#666;letter-spacing:-0.134px;">01:00 PM</span><span class="t" style="left:2254.65px;top:1020.00px;font-size:16.7px;color:#666;letter-spacing:-1.020px;">01:15 PM</span><div class="abs" style="left:1301.7px;top:804.5px;width:0;height:0;transform:rotate(-90deg)"><span class="t" style="left:0.00px;top:-7.00px;font-size:15.2px;color:rgba(110,95,90,.62);letter-spacing:-0.305px;font-family:'DejaVu Sans Mono','Liberation Mono',monospace;">Bytes</span></div><section class="card" style="left:2401.5px;top:701.8px;width:1142px;height:345.6px"></section><h3 class="t" style="left:2432.10px;top:717.00px;font-size:18.2px;color:#22313f;font-weight:700;letter-spacing:0.711px;">Restarts Rate by Pod Container</h3><svg style="left:3508.2px;top:715.2px" width="10" height="29.2" viewBox="0 0 10 29.2"><g fill="#444"><circle cx="5" cy="5" r="2.15"/><circle cx="5" cy="14.6" r="2.15"/><circle cx="5" cy="24.2" r="2.15"/></g></svg><svg style="left:2402.7px;top:701.9px" width="1140.5" height="344.8" viewBox="0 0 1140.5 344.8"><rect x="66.6" y="50.2" width="1056.7" height="256.1" fill="#eecbc2"/><path d="M83.6 308.1 H1124.3" stroke="#e6e6e6" stroke-width="1.5"/><path d="M66.6 82.6 H1125.3 M66.6 119.4 H1125.3 M66.6 156.2 H1125.3 M66.6 193.0 H1125.3 M66.6 229.8 H1125.3 M66.6 266.6 H1125.3 M66.6 303.4 H1125.3 M139.0 52.2 V308.3 M271.3 52.2 V308.3 M403.6 52.2 V308.3 M535.9 52.2 V308.3 M668.2 52.2 V308.3 M800.5 52.2 V308.3 M932.8 52.2 V308.3 M1065.1 52.2 V308.3 M170.0 52.2 V306.3 M240.4 52.2 V306.3 M432.5 52.2 V306.3 " stroke="rgba(110,80,80,.21)" stroke-width="1.2" fill="none"/><path d="M181.9 52.2 V306.3" stroke="rgba(225,120,110,.30)" stroke-width="1.2"/><polyline points="66.3,277.8 828.4,277.8" fill="none" stroke="#e8b04a" stroke-width="1.3" stroke-linejoin="round" stroke-dasharray="14 9" opacity="0.9"/><polyline points="71.4,277.8 1052.0,277.8" fill="none" stroke="#a8a098" stroke-width="1.3" stroke-linejoin="round" stroke-dasharray="14 9" opacity="0.9"/><polyline points="66.3,267.6 97.0,280.6" fill="none" stroke="#b888d8" stroke-width="1.4" stroke-linejoin="round" stroke-dasharray="11 8"/><polyline points="113.3,301.1 177.6,249.0" fill="none" stroke="#b888d8" stroke-width="1.4" stroke-linejoin="round" stroke-dasharray="11 8"/><polyline points="186.5,301.1 257.7,266.2 310.4,280.6" fill="none" stroke="#b888d8" stroke-width="1.4" stroke-linejoin="round" stroke-dasharray="11 8"/><polyline points="328.1,301.1 381.2,260.6" fill="none" stroke="#b888d8" stroke-width="1.4" stroke-linejoin="round" stroke-dasharray="11 8"/><polyline points="404.5,301.1 460.4,260.6" fill="none" stroke="#b888d8" stroke-width="1.4" stroke-linejoin="round" stroke-dasharray="11 8"/><polyline points="479.0,301.1 530.2,280.6" fill="none" stroke="#b888d8" stroke-width="1.4" stroke-linejoin="round" stroke-dasharray="11 8"/><polyline points="538.6,178.2 609.4,301.1" fill="none" stroke="#b888d8" stroke-width="1.4" stroke-linejoin="round" stroke-dasharray="11 8"/><polyline points="609.4,301.1 663.0,260.6" fill="none" stroke="#b888d8" stroke-width="1.4" stroke-linejoin="round" stroke-dasharray="11 8"/><polyline points="684.0,301.1 742.2,248.0" fill="none" stroke="#b888d8" stroke-width="1.4" stroke-linejoin="round" stroke-dasharray="11 8"/><polyline points="742.2,248.0 794.8,280.6" fill="none" stroke="#b888d8" stroke-width="1.4" stroke-linejoin="round" stroke-dasharray="11 8"/><polyline points="803.2,178.2 856.3,280.6 918.3,249.0" fill="none" stroke="#b888d8" stroke-width="1.4" stroke-linejoin="round" stroke-dasharray="11 8"/><polyline points="874.0,178.2 892.2,116.2 909.9,239.6 944.8,269.9 997.0,259.7 1049.6,280.6" fill="none" stroke="#b888d8" stroke-width="1.4" stroke-linejoin="round" stroke-dasharray="11 8"/><polyline points="927.1,301.1 979.8,280.6" fill="none" stroke="#b888d8" stroke-width="1.4" stroke-linejoin="round" stroke-dasharray="11 8"/><polyline points="988.2,178.2 1049.6,301.1" fill="none" stroke="#b888d8" stroke-width="1.4" stroke-linejoin="round" stroke-dasharray="11 8"/><polyline points="66.3,301.6 1121.9,301.6" fill="none" stroke="#9a4fd0" stroke-width="2.4" stroke-linejoin="round"/><polyline points="591.7,301.6 609.4,301.6" fill="none" stroke="#3f9c96" stroke-width="2.0" stroke-linejoin="round"/><polyline points="865.6,301.6 1049.6,301.6" fill="none" stroke="#3f9c96" stroke-width="2.0" stroke-linejoin="round"/><polyline points="97.0,280.6 106.3,301.1" fill="none" stroke="#9a4fd0" stroke-width="1.6" stroke-linejoin="round"/><polyline points="177.6,249.0 186.5,301.1" fill="none" stroke="#9a4fd0" stroke-width="1.6" stroke-linejoin="round"/><polyline points="310.4,280.6 318.8,178.2 328.1,301.1" fill="none" stroke="#9a4fd0" stroke-width="1.6" stroke-linejoin="round"/><polyline points="381.2,260.6 389.6,301.1" fill="none" stroke="#9a4fd0" stroke-width="1.6" stroke-linejoin="round"/><polyline points="460.4,260.6 468.8,301.1" fill="none" stroke="#9a4fd0" stroke-width="1.6" stroke-linejoin="round"/><polyline points="530.2,280.6 538.6,178.2" fill="none" stroke="#9a4fd0" stroke-width="1.6" stroke-linejoin="round"/><polyline points="591.7,301.1 600.6,54.7 609.4,301.1" fill="none" stroke="#9a4fd0" stroke-width="1.6" stroke-linejoin="round"/><polyline points="663.0,260.6 671.4,301.1" fill="none" stroke="#9a4fd0" stroke-width="1.6" stroke-linejoin="round"/><polyline points="794.8,280.6 803.2,178.2" fill="none" stroke="#9a4fd0" stroke-width="1.6" stroke-linejoin="round"/><polyline points="865.6,301.1 874.0,178.2" fill="none" stroke="#9a4fd0" stroke-width="1.6" stroke-linejoin="round"/><polyline points="918.3,249.0 927.1,301.1" fill="none" stroke="#9a4fd0" stroke-width="1.6" stroke-linejoin="round"/><polyline points="979.8,280.6 988.2,178.2" fill="none" stroke="#9a4fd0" stroke-width="1.6" stroke-linejoin="round"/><polyline points="1049.6,280.6 1059.0,301.1" fill="none" stroke="#9a4fd0" stroke-width="1.6" stroke-linejoin="round"/><polyline points="1059.0,301.1 1067.8,178.2 1076.7,301.1" fill="none" stroke="#9a4fd0" stroke-width="1.6" stroke-linejoin="round"/><polyline points="328.1,301.1 336.9,178.2 345.8,301.1" fill="none" stroke="#3f9c96" stroke-width="1.6" stroke-linejoin="round"/><polyline points="680.2,301.1 689.1,178.2 697.9,301.1" fill="none" stroke="#3f9c96" stroke-width="1.6" stroke-linejoin="round"/><rect x="63.7" y="303.6" width="8.6" height="9.8" rx="3.9" fill="#bc341c"/><rect x="165.7" y="303.6" width="8.6" height="9.8" rx="3.9" fill="#357ab8"/><rect x="177.9" y="303.6" width="8.6" height="9.8" rx="3.9" fill="#bc341c"/><rect x="236.1" y="303.6" width="8.6" height="9.8" rx="3.9" fill="#357ab8"/><rect x="428.2" y="303.6" width="8.6" height="9.8" rx="3.9" fill="#357ab8"/></svg><span class="t" style="left:2436.29px;top:776.00px;font-size:15.4px;color:#666;font-family:'DejaVu Sans Mono','Liberation Mono',monospace;">.03</span><span class="t" style="left:2427.02px;top:813.00px;font-size:15.4px;color:#666;font-family:'DejaVu Sans Mono','Liberation Mono',monospace;">.025</span><span class="t" style="left:2436.29px;top:850.00px;font-size:15.4px;color:#666;font-family:'DejaVu Sans Mono','Liberation Mono',monospace;">.02</span><span class="t" style="left:2427.02px;top:887.00px;font-size:15.4px;color:#666;font-family:'DejaVu Sans Mono','Liberation Mono',monospace;">.015</span><span class="t" style="left:2436.29px;top:924.00px;font-size:15.4px;color:#666;font-family:'DejaVu Sans Mono','Liberation Mono',monospace;">.01</span><span class="t" style="left:2427.02px;top:960.00px;font-size:15.4px;color:#666;font-family:'DejaVu Sans Mono','Liberation Mono',monospace;">.005</span><span class="t" style="left:2454.82px;top:997.00px;font-size:15.4px;color:#666;font-family:'DejaVu Sans Mono','Liberation Mono',monospace;">0</span><span class="t" style="left:2508.85px;top:1020.00px;font-size:16.7px;color:#666;letter-spacing:-0.512px;">11:30 AM</span><span class="t" style="left:2641.35px;top:1020.00px;font-size:16.7px;color:#666;letter-spacing:-0.569px;">11:45 AM</span><span class="t" style="left:2771.35px;top:1020.00px;font-size:16.7px;color:#666;letter-spacing:-0.220px;">12:00 PM</span><span class="t" style="left:2907.35px;top:1020.00px;font-size:16.7px;color:#666;letter-spacing:-1.277px;">12:15 PM</span><span class="t" style="left:3036.95px;top:1020.00px;font-size:16.7px;color:#666;letter-spacing:-0.505px;">12:30 PM</span><span class="t" style="left:3169.70px;top:1020.00px;font-size:16.7px;color:#666;letter-spacing:-0.634px;">12:45 PM</span><span class="t" style="left:3300.25px;top:1020.00px;font-size:16.7px;color:#666;letter-spacing:-0.134px;">01:00 PM</span><span class="t" style="left:3435.65px;top:1020.00px;font-size:16.7px;color:#666;letter-spacing:-1.020px;">01:15 PM</span><section class="card" style="left:40.4px;top:1084.9px;width:3503.8px;height:346.4px"></section><h3 class="t" style="left:70.30px;top:1101.00px;font-size:18.2px;color:#22313f;font-weight:700;letter-spacing:0.688px;">Pod Container Metrics</h3><svg style="left:3508.5px;top:1099.0px" width="10" height="29.2" viewBox="0 0 10 29.2"><g fill="#444"><circle cx="5" cy="5" r="2.15"/><circle cx="5" cy="14.6" r="2.15"/><circle cx="5" cy="24.2" r="2.15"/></g></svg><div class="abs" style="left:41.5px;top:1165.9px;width:3501.8px;height:1.9px;background:#d1d8dd"></div><span class="t" style="left:59.30px;top:1142.00px;font-size:17.3px;color:#2a76ad;font-weight:700;letter-spacing:1.080px;">nodename</span><span class="t" style="left:522.70px;top:1142.00px;font-size:17.3px;color:#2a76ad;font-weight:700;letter-spacing:0.655px;">cluster</span><span class="t" style="left:920.00px;top:1142.00px;font-size:17.3px;color:#2a76ad;font-weight:700;letter-spacing:0.981px;">container_name</span><span class="t" style="left:1434.30px;top:1142.00px;font-size:17.3px;color:#2a76ad;font-weight:700;letter-spacing:1.053px;">namespace_name</span><span class="t" style="left:1785.00px;top:1142.00px;font-size:17.3px;color:#2a76ad;font-weight:700;letter-spacing:1.223px;">pod_name</span><span class="t" style="left:2373.00px;top:1142.00px;font-size:17.3px;color:#2a76ad;font-weight:700;letter-spacing:0.872px;">resource_id</span><span class="t" style="left:2686.00px;top:1142.00px;font-size:17.3px;color:#2a76ad;font-weight:700;letter-spacing:0.954px;">FileSystem Usage (Byte)</span><span class="t" style="left:3056.40px;top:1142.00px;font-size:17.3px;color:#2a76ad;font-weight:700;letter-spacing:1.128px;">Memory Usage (Byte)</span><span class="t" style="left:3406.70px;top:1142.00px;font-size:17.3px;color:#2a76ad;font-weight:700;letter-spacing:1.117px;">Uptime (min)</span><svg style="left:2919.2px;top:1143.0000000000002px" width="12" height="16" viewBox="0 0 12 16"><path d="M5.8 15 V2.7 M0.5 8.1 L5.8 2.5 L11.1 8.1" fill="none" stroke="#2a76ad" stroke-width="1.2"/></svg><div class="abs" style="left:41.5px;top:1168.2px;width:3501px;height:263.09999999999997px;overflow:hidden"><span class="t" style="left:18.00px;top:7.00px;font-size:18px;color:#454545;letter-spacing:0.821px;">aks-agentpool-87375943-vmss000000</span><span class="t" style="left:481.20px;top:7.00px;font-size:18px;color:#454545;letter-spacing:0.529px;">rjc-azure-test-001.attached.attached.tmc</span><span class="t" style="left:878.50px;top:7.00px;font-size:18px;color:#454545;letter-spacing:0.627px;">node-driver-registrar</span><span class="t" style="left:1392.80px;top:7.00px;font-size:18px;color:#454545;letter-spacing:0.645px;">kube-system</span><span class="t" style="left:1743.50px;top:7.00px;font-size:18px;color:#454545;letter-spacing:0.457px;">csi-azuredisk-node-krvz6</span><span class="t" style="left:2331.80px;top:7.00px;font-size:18px;color:#454545;">-</span><span class="t" style="left:2881.09px;top:8.00px;font-size:17.3px;color:#454545;font-family:'DejaVu Sans Mono','Liberation Mono',monospace;">-</span><span class="t" style="left:3114.06px;top:8.00px;font-size:17.3px;color:#454545;font-family:'DejaVu Sans Mono','Liberation Mono',monospace;">5.362M</span><span class="t" style="left:3373.66px;top:8.00px;font-size:17.3px;color:#454545;font-family:'DejaVu Sans Mono','Liberation Mono',monospace;">25.570k</span><i class="sw" style="left:3187.5px;top:6.2px;background:#e8486b"></i><i class="sw" style="left:3457.5px;top:6.2px;background:#e8486b"></i><span class="t" style="left:18.00px;top:42.00px;font-size:18px;color:#454545;letter-spacing:0.821px;">aks-agentpool-87375943-vmss000000</span><span class="t" style="left:481.20px;top:42.00px;font-size:18px;color:#454545;letter-spacing:0.529px;">rjc-azure-test-001.attached.attached.tmc</span><span class="t" style="left:878.50px;top:42.00px;font-size:18px;color:#454545;letter-spacing:0.627px;">node-driver-registrar</span><span class="t" style="left:1392.80px;top:42.00px;font-size:18px;color:#454545;letter-spacing:0.645px;">kube-system</span><span class="t" style="left:1743.50px;top:42.00px;font-size:18px;color:#454545;letter-spacing:0.422px;">csi-azurefile-node-5bscl</span><span class="t" style="left:2331.80px;top:42.00px;font-size:18px;color:#454545;">-</span><span class="t" style="left:2881.09px;top:43.00px;font-size:17.3px;color:#454545;font-family:'DejaVu Sans Mono','Liberation Mono',monospace;">-</span><span class="t" style="left:3114.06px;top:43.00px;font-size:17.3px;color:#454545;font-family:'DejaVu Sans Mono','Liberation Mono',monospace;">8.708M</span><span class="t" style="left:3373.66px;top:43.00px;font-size:17.3px;color:#454545;font-family:'DejaVu Sans Mono','Liberation Mono',monospace;">25.571k</span><i class="sw" style="left:3187.5px;top:41.2px;background:#3a3fc4"></i><i class="sw" style="left:3457.5px;top:41.2px;background:#3a3fc4"></i><span class="t" style="left:18.00px;top:77.00px;font-size:18px;color:#454545;letter-spacing:0.821px;">aks-agentpool-87375943-vmss000000</span><span class="t" style="left:481.20px;top:77.00px;font-size:18px;color:#454545;letter-spacing:0.529px;">rjc-azure-test-001.attached.attached.tmc</span><span class="t" style="left:878.50px;top:77.00px;font-size:18px;color:#454545;letter-spacing:0.344px;">azurefile</span><span class="t" style="left:1392.80px;top:77.00px;font-size:18px;color:#454545;letter-spacing:0.645px;">kube-system</span><span class="t" style="left:1743.50px;top:77.00px;font-size:18px;color:#454545;letter-spacing:0.422px;">csi-azurefile-node-5bscl</span><span class="t" style="left:2331.80px;top:77.00px;font-size:18px;color:#454545;">-</span><span class="t" style="left:2881.09px;top:78.00px;font-size:17.3px;color:#454545;font-family:'DejaVu Sans Mono','Liberation Mono',monospace;">-</span><span class="t" style="left:3114.06px;top:78.00px;font-size:17.3px;color:#454545;font-family:'DejaVu Sans Mono','Liberation Mono',monospace;">9.044M</span><span class="t" style="left:3373.66px;top:78.00px;font-size:17.3px;color:#454545;font-family:'DejaVu Sans Mono','Liberation Mono',monospace;">25.571k</span><i class="sw" style="left:3187.5px;top:76.2px;background:#4aa3ae"></i><i class="sw" style="left:3457.5px;top:76.2px;background:#4aa3ae"></i><span class="t" style="left:18.00px;top:113.00px;font-size:18px;color:#454545;letter-spacing:0.821px;">aks-agentpool-87375943-vmss000000</span><span class="t" style="left:481.20px;top:113.00px;font-size:18px;color:#454545;letter-spacing:0.529px;">rjc-azure-test-001.attached.attached.tmc</span><span class="t" style="left:878.50px;top:113.00px;font-size:18px;color:#454545;letter-spacing:0.382px;">azuredisk</span><span class="t" style="left:1392.80px;top:113.00px;font-size:18px;color:#454545;letter-spacing:0.645px;">kube-system</span><span class="t" style="left:1743.50px;top:113.00px;font-size:18px;color:#454545;letter-spacing:0.457px;">csi-azuredisk-node-krvz6</span><span class="t" style="left:2331.80px;top:113.00px;font-size:18px;color:#454545;">-</span><span class="t" style="left:2881.09px;top:114.00px;font-size:17.3px;color:#454545;font-family:'DejaVu Sans Mono','Liberation Mono',monospace;">-</span><span class="t" style="left:3114.06px;top:114.00px;font-size:17.3px;color:#454545;font-family:'DejaVu Sans Mono','Liberation Mono',monospace;">9.429M</span><span class="t" style="left:3373.66px;top:114.00px;font-size:17.3px;color:#454545;font-family:'DejaVu Sans Mono','Liberation Mono',monospace;">25.570k</span><i class="sw" style="left:3187.5px;top:112.2px;background:#4499db"></i><i class="sw" style="left:3457.5px;top:112.2px;background:#4499db"></i><span class="t" style="left:18.00px;top:148.00px;font-size:18px;color:#454545;letter-spacing:0.821px;">aks-agentpool-87375943-vmss000000</span><span class="t" style="left:481.20px;top:148.00px;font-size:18px;color:#454545;letter-spacing:0.529px;">rjc-azure-test-001.attached.attached.tmc</span><span class="t" style="left:878.50px;top:148.00px;font-size:18px;color:#454545;letter-spacing:0.418px;">liveness-probe</span><span class="t" style="left:1392.80px;top:148.00px;font-size:18px;color:#454545;letter-spacing:0.645px;">kube-system</span><span class="t" style="left:1743.50px;top:148.00px;font-size:18px;color:#454545;letter-spacing:0.457px;">csi-azuredisk-node-krvz6</span><span class="t" style="left:2331.80px;top:148.00px;font-size:18px;color:#454545;">-</span><span class="t" style="left:2881.09px;top:149.00px;font-size:17.3px;color:#454545;font-family:'DejaVu Sans Mono','Liberation Mono',monospace;">-</span><span class="t" style="left:3114.06px;top:149.00px;font-size:17.3px;color:#454545;font-family:'DejaVu Sans Mono','Liberation Mono',monospace;">9.626M</span><span class="t" style="left:3373.66px;top:149.00px;font-size:17.3px;color:#454545;font-family:'DejaVu Sans Mono','Liberation Mono',monospace;">25.570k</span><i class="sw" style="left:3187.5px;top:147.2px;background:#e8702a"></i><i class="sw" style="left:3457.5px;top:147.2px;background:#e8702a"></i><span class="t" style="left:18.00px;top:183.00px;font-size:18px;color:#454545;letter-spacing:0.821px;">aks-agentpool-87375943-vmss000000</span><span class="t" style="left:481.20px;top:183.00px;font-size:18px;color:#454545;letter-spacing:0.529px;">rjc-azure-test-001.attached.attached.tmc</span><span class="t" style="left:878.50px;top:183.00px;font-size:18px;color:#454545;letter-spacing:0.418px;">liveness-probe</span><span class="t" style="left:1392.80px;top:183.00px;font-size:18px;color:#454545;letter-spacing:0.645px;">kube-system</span><span class="t" style="left:1743.50px;top:183.00px;font-size:18px;color:#454545;letter-spacing:0.422px;">csi-azurefile-node-5bscl</span><span class="t" style="left:2331.80px;top:183.00px;font-size:18px;color:#454545;">-</span><span class="t" style="left:2881.09px;top:184.00px;font-size:17.3px;color:#454545;font-family:'DejaVu Sans Mono','Liberation Mono',monospace;">-</span><span class="t" style="left:3103.66px;top:184.00px;font-size:17.3px;color:#454545;font-family:'DejaVu Sans Mono','Liberation Mono',monospace;">12.235M</span><span class="t" style="left:3373.66px;top:184.00px;font-size:17.3px;color:#454545;font-family:'DejaVu Sans Mono','Liberation Mono',monospace;">25.571k</span><i class="sw" style="left:3187.5px;top:182.2px;background:#4a9b72"></i><i class="sw" style="left:3457.5px;top:182.2px;background:#4a9b72"></i><span class="t" style="left:18.00px;top:218.00px;font-size:18px;color:#454545;letter-spacing:0.821px;">aks-agentpool-87375943-vmss000000</span><span class="t" style="left:481.20px;top:218.00px;font-size:18px;color:#454545;letter-spacing:0.529px;">rjc-azure-test-001.attached.attached.tmc</span><span class="t" style="left:878.50px;top:218.00px;font-size:18px;color:#454545;letter-spacing:0.529px;">azure-ip-masq-agent</span><span class="t" style="left:1392.80px;top:218.00px;font-size:18px;color:#454545;letter-spacing:0.645px;">kube-system</span><span class="t" style="left:1743.50px;top:218.00px;font-size:18px;color:#454545;letter-spacing:0.570px;">azure-ip-masq-agent-7p8m6</span><span class="t" style="left:2331.80px;top:218.00px;font-size:18px;color:#454545;">-</span><span class="t" style="left:2881.09px;top:219.00px;font-size:17.3px;color:#454545;font-family:'DejaVu Sans Mono','Liberation Mono',monospace;">-</span><span class="t" style="left:3103.66px;top:219.00px;font-size:17.3px;color:#454545;font-family:'DejaVu Sans Mono','Liberation Mono',monospace;">15.081M</span><span class="t" style="left:3384.06px;top:219.00px;font-size:17.3px;color:#454545;font-family:'DejaVu Sans Mono','Liberation Mono',monospace;">5.406k</span><i class="sw" style="left:3187.5px;top:217.2px;background:#4e7d1e"></i><i class="sw" style="left:3457.5px;top:217.2px;background:#4e7d1e"></i><span class="t" style="left:18.00px;top:253.00px;font-size:18px;color:#454545;letter-spacing:0.821px;">aks-agentpool-87375943-vmss000000</span><span class="t" style="left:481.20px;top:253.00px;font-size:18px;color:#454545;letter-spacing:0.529px;">rjc-azure-test-001.attached.attached.tmc</span><span class="t" style="left:878.50px;top:253.00px;font-size:18px;color:#454545;letter-spacing:0.817px;">kube-proxy</span><span class="t" style="left:1392.80px;top:253.00px;font-size:18px;color:#454545;letter-spacing:0.645px;">kube-system</span><span class="t" style="left:1743.50px;top:253.00px;font-size:18px;color:#454545;letter-spacing:0.700px;">kube-proxy-h292h</span><span class="t" style="left:2331.80px;top:253.00px;font-size:18px;color:#454545;">-</span><span class="t" style="left:2881.09px;top:254.00px;font-size:17.3px;color:#454545;font-family:'DejaVu Sans Mono','Liberation Mono',monospace;">-</span><span class="t" style="left:3103.66px;top:254.00px;font-size:17.3px;color:#454545;font-family:'DejaVu Sans Mono','Liberation Mono',monospace;">17.072M</span><span class="t" style="left:3373.66px;top:254.00px;font-size:17.3px;color:#454545;font-family:'DejaVu Sans Mono','Liberation Mono',monospace;">25.571k</span><i class="sw" style="left:3187.5px;top:252.2px;background:#95601e"></i><i class="sw" style="left:3457.5px;top:252.2px;background:#95601e"></i></div><section class="card" style="left:40.4px;top:1468.9px;width:3503.8px;height:346.4px"></section><h3 class="t" style="left:70.30px;top:1485.00px;font-size:18.2px;color:#22313f;font-weight:700;letter-spacing:0.815px;">Containers Waiting</h3><svg style="left:3508.5px;top:1483.0px" width="10" height="29.2" viewBox="0 0 10 29.2"><g fill="#444"><circle cx="5" cy="5" r="2.15"/><circle cx="5" cy="14.6" r="2.15"/><circle cx="5" cy="24.2" r="2.15"/></g></svg><div class="abs" style="left:41.5px;top:1549.9px;width:3501.8px;height:1.9px;background:#d1d8dd"></div><span class="t" style="left:59.30px;top:1526.00px;font-size:17.3px;color:#2a76ad;font-weight:700;letter-spacing:1.080px;">nodename</span><span class="t" style="left:704.00px;top:1526.00px;font-size:17.3px;color:#2a76ad;font-weight:700;letter-spacing:0.655px;">cluster</span><span class="t" style="left:1411.50px;top:1526.00px;font-size:17.3px;color:#2a76ad;font-weight:700;letter-spacing:0.981px;">container_name</span><span class="t" style="left:1931.40px;top:1526.00px;font-size:17.3px;color:#2a76ad;font-weight:700;letter-spacing:1.053px;">namespace_name</span><span class="t" style="left:2474.00px;top:1526.00px;font-size:17.3px;color:#2a76ad;font-weight:700;letter-spacing:1.223px;">pod_name</span><span class="t" style="left:3450.00px;top:1526.00px;font-size:17.3px;color:#2a76ad;font-weight:700;letter-spacing:0.961px;">Value</span><svg style="left:3509.4px;top:1528.0px" width="12" height="16" viewBox="0 0 12 16"><path d="M5.8 1 V13.3 M0.5 7.9 L5.8 13.5 L11.1 7.9" fill="none" stroke="#2a76ad" stroke-width="1.2"/></svg><div class="abs" style="left:41.5px;top:1552.2px;width:3501px;height:263.09999999999997px;overflow:hidden"><i class="sw" style="left:17.700000000000003px;top:5.8px;background:#e8486b"></i><span class="t" style="left:43.70px;top:7.00px;font-size:18px;color:#454545;letter-spacing:0.542px;">gke-rocket-2-pool-big-71565742-kcvj</span><span class="t" style="left:662.50px;top:7.00px;font-size:18px;color:#454545;letter-spacing:0.616px;">rocket-2.attached.attached.tmc</span><span class="t" style="left:1370.00px;top:7.00px;font-size:18px;color:#454545;letter-spacing:0.681px;">kapp-controller</span><span class="t" style="left:1889.90px;top:7.00px;font-size:18px;color:#454545;letter-spacing:0.559px;">tanzu-system</span><span class="t" style="left:2432.50px;top:7.00px;font-size:18px;color:#454545;letter-spacing:0.727px;">kapp-controller-5dbc6d94f5-z8jvg</span><span class="t" style="left:3420.47px;top:8.00px;font-size:17.3px;color:#454545;font-family:'DejaVu Sans Mono','Liberation Mono',monospace;">2.000</span><i class="sw" style="left:17.700000000000003px;top:40.8px;background:#2e6fe0"></i><span class="t" style="left:43.70px;top:42.00px;font-size:18px;color:#454545;letter-spacing:0.430px;">gke-rocket-2-pool-big-9e932701-1lka</span><span class="t" style="left:662.50px;top:42.00px;font-size:18px;color:#454545;letter-spacing:0.616px;">rocket-2.attached.attached.tmc</span><span class="t" style="left:1370.00px;top:42.00px;font-size:18px;color:#454545;letter-spacing:0.627px;">secretgen-controller</span><span class="t" style="left:1889.90px;top:42.00px;font-size:18px;color:#454545;letter-spacing:0.559px;">tanzu-system</span><span class="t" style="left:2432.50px;top:42.00px;font-size:18px;color:#454545;letter-spacing:0.725px;">secretgen-controller-58bdd985f4-hl6bd</span><span class="t" style="left:3420.47px;top:43.00px;font-size:17.3px;color:#454545;font-family:'DejaVu Sans Mono','Liberation Mono',monospace;">2.000</span><i class="sw" style="left:17.700000000000003px;top:75.8px;background:#163e80"></i><span class="t" style="left:43.70px;top:77.00px;font-size:18px;color:#454545;letter-spacing:0.231px;">ip-10-0-1-123.us-west-2.compute.internal</span><span class="t" style="left:662.50px;top:77.00px;font-size:18px;color:#454545;letter-spacing:0.563px;">tanzu-demo.arul-tmc-pa.aws-hosted.tmc</span><span class="t" style="left:1370.00px;top:77.00px;font-size:18px;color:#454545;letter-spacing:0.437px;">server</span><span class="t" style="left:1889.90px;top:77.00px;font-size:18px;color:#454545;letter-spacing:0.776px;">default</span><span class="t" style="left:2432.50px;top:77.00px;font-size:18px;color:#454545;letter-spacing:0.624px;">gemfire-cluster-server-0</span><span class="t" style="left:3420.47px;top:78.00px;font-size:17.3px;color:#454545;font-family:'DejaVu Sans Mono','Liberation Mono',monospace;">2.000</span><i class="sw" style="left:17.700000000000003px;top:111.8px;background:#f2a93b"></i><span class="t" style="left:43.70px;top:113.00px;font-size:18px;color:#454545;letter-spacing:0.244px;">ip-10-0-1-147.us-west-2.compute.internal</span><span class="t" style="left:662.50px;top:113.00px;font-size:18px;color:#454545;letter-spacing:0.563px;">tanzu-demo.arul-tmc-pa.aws-hosted.tmc</span><span class="t" style="left:1370.00px;top:113.00px;font-size:18px;color:#454545;letter-spacing:0.437px;">server</span><span class="t" style="left:1889.90px;top:113.00px;font-size:18px;color:#454545;letter-spacing:0.776px;">default</span><span class="t" style="left:2432.50px;top:113.00px;font-size:18px;color:#454545;letter-spacing:0.381px;">gemfire-cluster-server-1</span><span class="t" style="left:3420.47px;top:114.00px;font-size:17.3px;color:#454545;font-family:'DejaVu Sans Mono','Liberation Mono',monospace;">2.000</span><i class="sw" style="left:17.700000000000003px;top:146.8px;background:#2d5a42"></i><span class="t" style="left:43.70px;top:148.00px;font-size:18px;color:#454545;letter-spacing:0.291px;">ip-10-0-21-106.us-west-2.compute.internal</span><span class="t" style="left:662.50px;top:148.00px;font-size:18px;color:#454545;letter-spacing:0.609px;">tola-tanzu-data</span><span class="t" style="left:1370.00px;top:148.00px;font-size:18px;color:#454545;letter-spacing:0.910px;">rabbitmq</span><span class="t" style="left:1889.90px;top:148.00px;font-size:18px;color:#454545;letter-spacing:0.525px;">data-samples-w02-s001</span><span class="t" style="left:2432.50px;top:148.00px;font-size:18px;color:#454545;letter-spacing:0.452px;">rabbitcluster1-server-0</span><span class="t" style="left:3420.47px;top:149.00px;font-size:17.3px;color:#454545;font-family:'DejaVu Sans Mono','Liberation Mono',monospace;">2.000</span><i class="sw" style="left:17.700000000000003px;top:181.8px;background:#4e7d1e"></i><span class="t" style="left:43.70px;top:183.00px;font-size:18px;color:#454545;letter-spacing:0.291px;">ip-10-0-21-106.us-west-2.compute.internal</span><span class="t" style="left:662.50px;top:183.00px;font-size:18px;color:#454545;letter-spacing:0.609px;">tola-tanzu-data</span><span class="t" style="left:1370.00px;top:183.00px;font-size:18px;color:#454545;letter-spacing:0.874px;">portal</span><span class="t" style="left:1889.90px;top:183.00px;font-size:18px;color:#454545;letter-spacing:0.438px;">data-samples-ui</span><span class="t" style="left:2432.50px;top:183.00px;font-size:18px;color:#454545;letter-spacing:0.686px;">learningcenter-portal-86d4f885d5-9s6kp</span><span class="t" style="left:3420.47px;top:184.00px;font-size:17.3px;color:#454545;font-family:'DejaVu Sans Mono','Liberation Mono',monospace;">2.000</span><i class="sw" style="left:17.700000000000003px;top:216.8px;background:#95601e"></i><span class="t" style="left:43.70px;top:218.00px;font-size:18px;color:#454545;letter-spacing:0.291px;">ip-10-0-21-106.us-west-2.compute.internal</span><span class="t" style="left:662.50px;top:218.00px;font-size:18px;color:#454545;letter-spacing:0.609px;">tola-tanzu-data</span><span class="t" style="left:1370.00px;top:218.00px;font-size:18px;color:#454545;letter-spacing:0.759px;">greenplum-operator</span><span class="t" style="left:1889.90px;top:218.00px;font-size:18px;color:#454545;letter-spacing:0.629px;">greenplum-system</span><span class="t" style="left:2432.50px;top:218.00px;font-size:18px;color:#454545;letter-spacing:0.785px;">greenplum-operator-67b68f6776-8fz6q</span><span class="t" style="left:3420.47px;top:219.00px;font-size:17.3px;color:#454545;font-family:'DejaVu Sans Mono','Liberation Mono',monospace;">2.000</span><i class="sw" style="left:17.700000000000003px;top:251.8px;background:#8a9298"></i><span class="t" style="left:43.70px;top:253.00px;font-size:18px;color:#454545;letter-spacing:0.291px;">ip-10-0-21-106.us-west-2.compute.internal</span><span class="t" style="left:662.50px;top:253.00px;font-size:18px;color:#454545;letter-spacing:0.609px;">tola-tanzu-data</span><span class="t" style="left:1370.00px;top:253.00px;font-size:18px;color:#454545;letter-spacing:0.874px;">portal</span><span class="t" style="left:1889.90px;top:253.00px;font-size:18px;color:#454545;letter-spacing:0.553px;">learning-center-guided-ui</span><span class="t" style="left:2432.50px;top:253.00px;font-size:18px;color:#454545;letter-spacing:0.697px;">learningcenter-portal-fd6bd779-468z5</span><span class="t" style="left:3420.47px;top:254.00px;font-size:17.3px;color:#454545;font-family:'DejaVu Sans Mono','Liberation Mono',monospace;">2.000</span></div><aside class="abs" style="left:3520.4px;top:1718px;width:26px;height:63.7px;background:#6b6570;overflow:hidden"><svg style="left:0;top:0" width="26" height="64" viewBox="0 0 26 64"><path d="M27 30.5 c-5 0 -8 3.5 -8 7 c0 3 2.5 5.3 5.5 5.3 c1.2 0 2 -.3 2.5 -.6" fill="none" stroke="#fff" stroke-width="2"/></svg></aside></div></body></html>
